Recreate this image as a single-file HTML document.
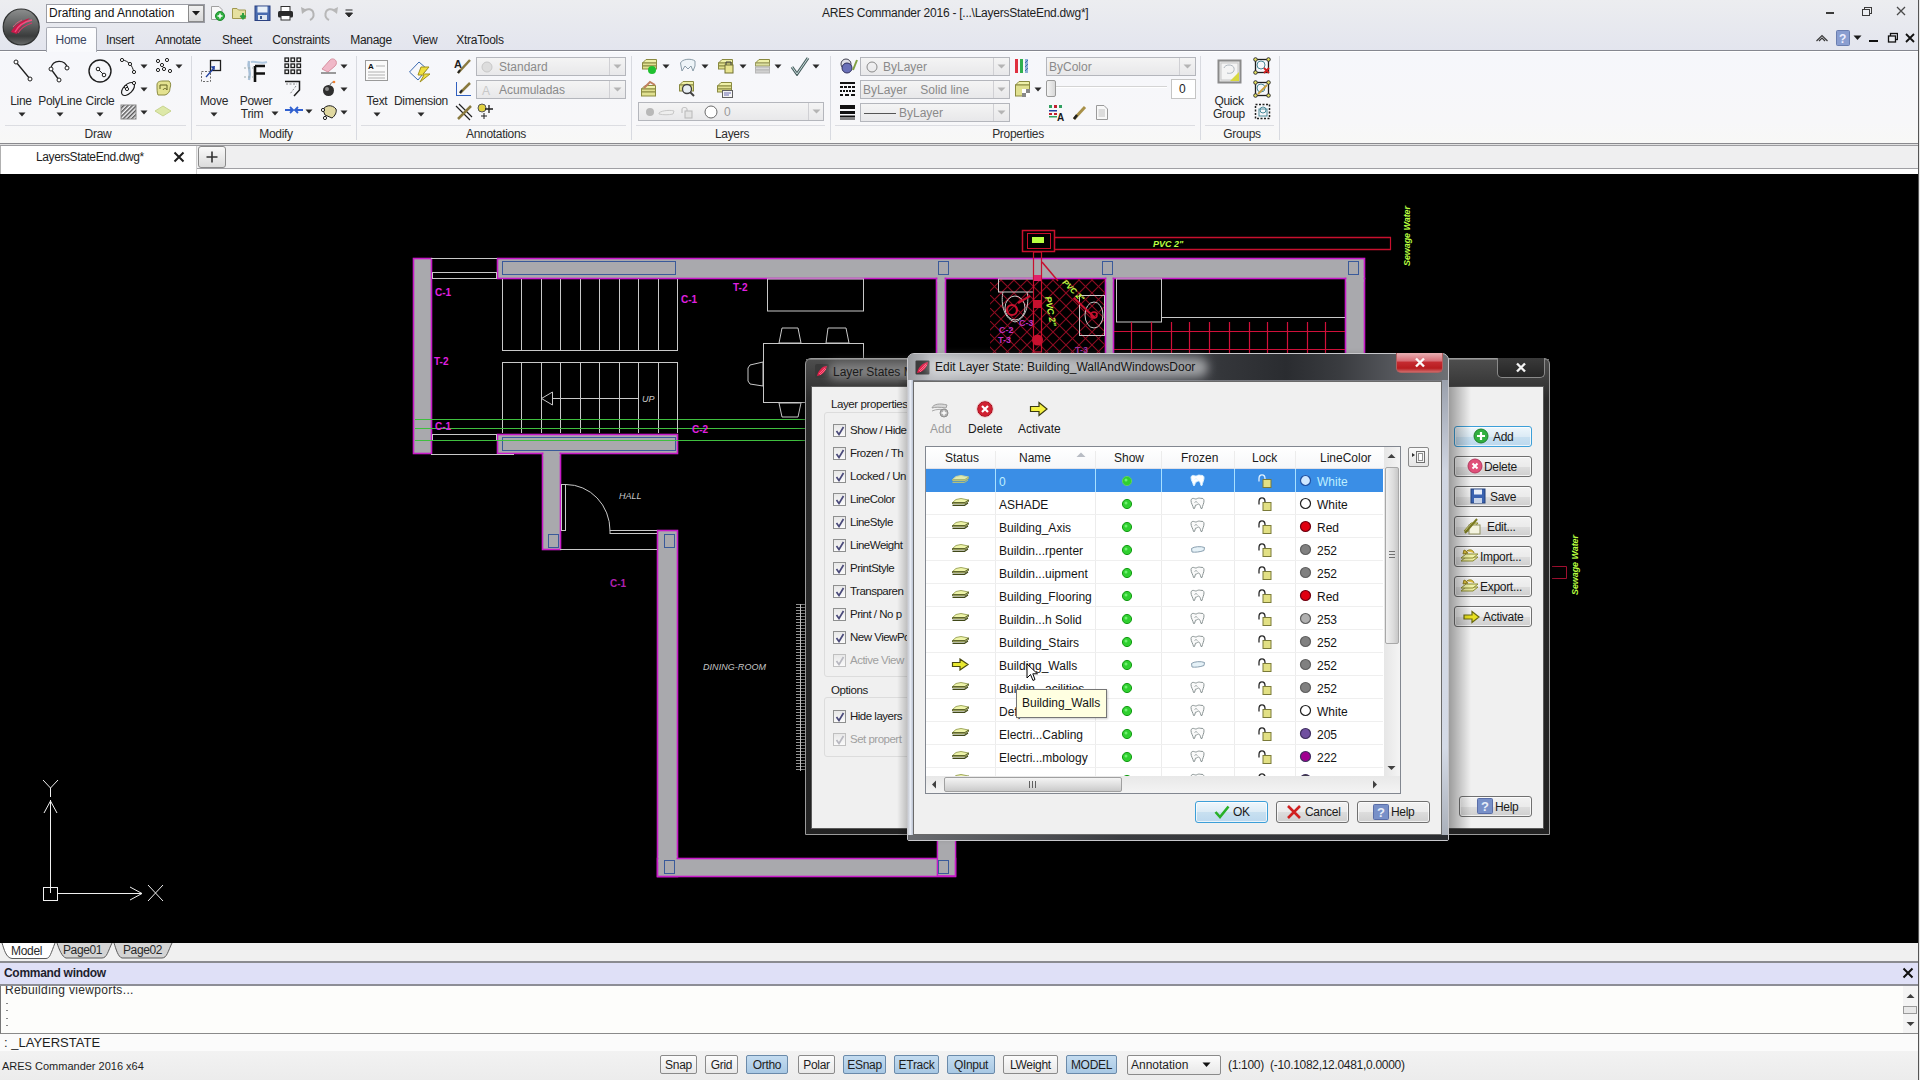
<!DOCTYPE html>
<html><head><meta charset="utf-8">
<style>
*{margin:0;padding:0;box-sizing:border-box}
html,body{width:1920px;height:1080px;overflow:hidden;background:#000;font-family:"Liberation Sans",sans-serif;font-size:12px;color:#1e1e1e}
.a{position:absolute}
.t{position:absolute;white-space:nowrap;line-height:1}
#title{left:0;top:0;width:1920px;height:51px;background:linear-gradient(#ecedf0,#e3e5ee)}
#ribbon{left:0;top:50px;width:1920px;height:96px;background:linear-gradient(#f6f7fb,#f7f7f9 75%,#f8f8f6);border-top:1px solid #858790;box-shadow:inset 0 1px 0 #fff}
#rb1{left:0;top:143px;width:1920px;height:3px;background:linear-gradient(#8a8a8e 0,#8a8a8e 33%,#e0e0e0 33%,#e0e0e0 66%,#9c9ca0 66%)}
#doctabs{left:0;top:146px;width:1920px;height:28px;background:linear-gradient(#efeff0 0,#efeff0 22px,#a0a0a4 22px,#a0a0a4 23px,#fdfdfd 23px)}
#draw{left:0;top:174px;width:1920px;height:769px;background:#000}
#laytabs{left:0;top:943px;width:1920px;height:18px;background:#f0f0f0}
#cmdhdr{left:0;top:961px;width:1920px;height:25px;background:#dfe0f7;border-top:2px solid #8a8b90;border-bottom:2px solid #8d8e96}
#cmdtxt{left:0;top:986px;width:1920px;height:48px;background:#fdfdfb;border-left:1px solid #777;border-bottom:1px solid #8a8a8a}
#cmdline{left:0;top:1034px;width:1920px;height:17px;background:#fbfbfb}
#status{left:0;top:1051px;width:1920px;height:29px;background:linear-gradient(#f2f2f2,#ececec)}
</style></head><body>
<div id="title" class="a"></div>
<div id="ribbon" class="a"></div>
<div id="rb1" class="a"></div>
<div id="doctabs" class="a"></div>
<div id="draw" class="a"></div>
<svg class="a" style="left:0;top:0;font-family:'Liberation Sans',sans-serif" width="1920" height="1080" viewBox="0 0 1920 1080"><rect x="413.5" y="258.5" width="18" height="195" fill="#a9a9ad" stroke="#c81ac8" stroke-width="1.6"/><rect x="497.5" y="258.5" width="867" height="20" fill="#a9a9ad" stroke="#c81ac8" stroke-width="1.6"/><rect x="497.5" y="434.5" width="180" height="19" fill="#a9a9ad" stroke="#c81ac8" stroke-width="1.6"/><rect x="542.5" y="453.5" width="18" height="96" fill="#a9a9ad" stroke="#c81ac8" stroke-width="1.6"/><rect x="657.5" y="530.5" width="20" height="346" fill="#a9a9ad" stroke="#c81ac8" stroke-width="1.6"/><rect x="657.5" y="858.5" width="298" height="18" fill="#a9a9ad" stroke="#c81ac8" stroke-width="1.6"/><rect x="937.5" y="836" width="18" height="40" fill="#a9a9ad" stroke="#c81ac8" stroke-width="1.6"/><rect x="936.5" y="278.5" width="9" height="80" fill="#a9a9ad" stroke="#c81ac8" stroke-width="1.6"/><rect x="1105.5" y="278.5" width="8" height="80" fill="#a9a9ad" stroke="#c81ac8" stroke-width="1.6"/><rect x="1345.5" y="278.5" width="19" height="80" fill="#a9a9ad" stroke="#c81ac8" stroke-width="1.6"/><rect x="543.5" y="450" width="16" height="6" fill="#a9a9ad"/><rect x="658.5" y="856" width="18" height="6" fill="#a9a9ad"/><rect x="938.5" y="834" width="16" height="26" fill="#a9a9ad"/><rect x="937.5" y="276" width="7" height="6" fill="#a9a9ad"/><rect x="1106.5" y="276" width="6" height="6" fill="#a9a9ad"/><rect x="1346.5" y="276" width="17" height="6" fill="#a9a9ad"/><rect x="502.5" y="261.5" width="173" height="13" fill="#a9a9ad" stroke="#3a5a9a" stroke-width="1"/><rect x="502.5" y="437.5" width="173" height="13" fill="#a9a9ad" stroke="#3a5a9a" stroke-width="1"/><rect x="938.5" y="261.5" width="10" height="13" fill="none" stroke="#3a5a9a" stroke-width="1"/><rect x="1102.5" y="261.5" width="10" height="13" fill="none" stroke="#3a5a9a" stroke-width="1"/><rect x="1348.5" y="261.5" width="10" height="13" fill="none" stroke="#3a5a9a" stroke-width="1"/><rect x="548.5" y="534.5" width="10" height="13" fill="none" stroke="#3a5a9a" stroke-width="1"/><rect x="664.5" y="534.5" width="10" height="13" fill="none" stroke="#3a5a9a" stroke-width="1"/><rect x="664.5" y="860.5" width="10" height="13" fill="none" stroke="#3a5a9a" stroke-width="1"/><rect x="938.5" y="860.5" width="10" height="13" fill="none" stroke="#3a5a9a" stroke-width="1"/><line x1="431" y1="258.5" x2="497" y2="258.5" stroke="#c8c8c8" stroke-width="1"/><rect x="432.5" y="272.5" width="64" height="6" fill="none" stroke="#c8c8c8" stroke-width="1"/><rect x="432.5" y="434.5" width="64" height="6" fill="none" stroke="#c8c8c8" stroke-width="1"/><line x1="431" y1="454.5" x2="514" y2="454.5" stroke="#c8c8c8" stroke-width="1"/><line x1="502.5" y1="279" x2="502.5" y2="350" stroke="#c8c8c8" stroke-width="1"/><line x1="502.5" y1="362" x2="502.5" y2="433" stroke="#c8c8c8" stroke-width="1"/><line x1="521.5" y1="279" x2="521.5" y2="350" stroke="#c8c8c8" stroke-width="1"/><line x1="521.5" y1="362" x2="521.5" y2="433" stroke="#c8c8c8" stroke-width="1"/><line x1="541.5" y1="279" x2="541.5" y2="350" stroke="#c8c8c8" stroke-width="1"/><line x1="541.5" y1="362" x2="541.5" y2="433" stroke="#c8c8c8" stroke-width="1"/><line x1="560.5" y1="279" x2="560.5" y2="350" stroke="#c8c8c8" stroke-width="1"/><line x1="560.5" y1="362" x2="560.5" y2="433" stroke="#c8c8c8" stroke-width="1"/><line x1="580.5" y1="279" x2="580.5" y2="350" stroke="#c8c8c8" stroke-width="1"/><line x1="580.5" y1="362" x2="580.5" y2="433" stroke="#c8c8c8" stroke-width="1"/><line x1="599.5" y1="279" x2="599.5" y2="350" stroke="#c8c8c8" stroke-width="1"/><line x1="599.5" y1="362" x2="599.5" y2="433" stroke="#c8c8c8" stroke-width="1"/><line x1="619.5" y1="279" x2="619.5" y2="350" stroke="#c8c8c8" stroke-width="1"/><line x1="619.5" y1="362" x2="619.5" y2="433" stroke="#c8c8c8" stroke-width="1"/><line x1="638.5" y1="279" x2="638.5" y2="350" stroke="#c8c8c8" stroke-width="1"/><line x1="638.5" y1="362" x2="638.5" y2="433" stroke="#c8c8c8" stroke-width="1"/><line x1="658.5" y1="279" x2="658.5" y2="350" stroke="#c8c8c8" stroke-width="1"/><line x1="658.5" y1="362" x2="658.5" y2="433" stroke="#c8c8c8" stroke-width="1"/><line x1="677.5" y1="279" x2="677.5" y2="350" stroke="#c8c8c8" stroke-width="1"/><line x1="677.5" y1="362" x2="677.5" y2="433" stroke="#c8c8c8" stroke-width="1"/><line x1="502" y1="350.5" x2="678" y2="350.5" stroke="#c8c8c8" stroke-width="1"/><line x1="502" y1="362.5" x2="678" y2="362.5" stroke="#c8c8c8" stroke-width="1"/><polygon points="541.5,398.5 552.5,392 552.5,405" fill="none" stroke="#c8c8c8" stroke-width="1"/><line x1="553" y1="398.5" x2="638" y2="398.5" stroke="#c8c8c8" stroke-width="1"/><text x="642" y="402" fill="#c8c8c8" font-size="9" font-style="italic">UP</text><line x1="415" y1="419.5" x2="806" y2="419.5" stroke="#3fbf3f" stroke-width="1"/><line x1="415" y1="428.5" x2="806" y2="428.5" stroke="#3fbf3f" stroke-width="1"/><line x1="415" y1="440.5" x2="806" y2="440.5" stroke="#3fbf3f" stroke-width="1"/><text x="435" y="296" fill="#e020e0" font-size="10" font-weight="bold">C-1</text><text x="434" y="365" fill="#e020e0" font-size="10" font-weight="bold">T-2</text><text x="435" y="430" fill="#e020e0" font-size="10" font-weight="bold">C-1</text><text x="681" y="303" fill="#e020e0" font-size="10" font-weight="bold">C-1</text><text x="733" y="291" fill="#e020e0" font-size="10" font-weight="bold">T-2</text><text x="692" y="433" fill="#e020e0" font-size="10" font-weight="bold">C-2</text><text x="610" y="587" fill="#b020b0" font-size="10" font-weight="bold">C-1</text><rect x="767.5" y="279" width="96" height="32" fill="none" stroke="#c8c8c8" stroke-width="1"/><rect x="763.5" y="343.5" width="100" height="59" fill="none" stroke="#c8c8c8" stroke-width="1"/><polygon points="779,343 782,328 798,328 801,343" fill="none" stroke="#c8c8c8" stroke-width="1"/><polygon points="826,343 828,328 846,328 849,343" fill="none" stroke="#c8c8c8" stroke-width="1"/><polygon points="779,403 782,417 798,417 801,403" fill="none" stroke="#c8c8c8" stroke-width="1"/><polygon points="763,362 750,365 748,368 748,381 750,384 763,386" fill="none" stroke="#c8c8c8" stroke-width="1"/><line x1="677.5" y1="279" x2="677.5" y2="350" stroke="#c8c8c8" stroke-width="1"/><line x1="677.5" y1="362" x2="677.5" y2="433" stroke="#c8c8c8" stroke-width="1"/><rect x="561.5" y="484.5" width="4" height="46" fill="none" stroke="#c8c8c8" stroke-width="1"/><path d="M566,484.5 A44,46 0 0 1 610,530.5" fill="none" stroke="#c8c8c8" stroke-width="1"/><line x1="610" y1="530.5" x2="657" y2="530.5" stroke="#c8c8c8" stroke-width="1"/><line x1="610" y1="533.5" x2="657" y2="533.5" stroke="#c8c8c8" stroke-width="1"/><line x1="610" y1="530" x2="610" y2="534" stroke="#c8c8c8" stroke-width="1"/><line x1="560" y1="549.5" x2="657" y2="549.5" stroke="#c8c8c8" stroke-width="1"/><text x="619" y="499" fill="#c8c8c8" font-size="9" font-style="italic">HALL</text><text x="703" y="670" fill="#c8c8c8" font-size="9" font-style="italic" textLength="63">DINING-ROOM</text><line x1="796" y1="604.5" x2="806" y2="604.5" stroke="#bdbdbd" stroke-width="0.8"/><line x1="796" y1="607.5" x2="806" y2="607.5" stroke="#bdbdbd" stroke-width="0.8"/><line x1="796" y1="610.5" x2="806" y2="610.5" stroke="#bdbdbd" stroke-width="0.8"/><line x1="796" y1="613.5" x2="806" y2="613.5" stroke="#bdbdbd" stroke-width="0.8"/><line x1="796" y1="616.5" x2="806" y2="616.5" stroke="#bdbdbd" stroke-width="0.8"/><line x1="796" y1="619.5" x2="806" y2="619.5" stroke="#bdbdbd" stroke-width="0.8"/><line x1="796" y1="622.5" x2="806" y2="622.5" stroke="#bdbdbd" stroke-width="0.8"/><line x1="796" y1="625.5" x2="806" y2="625.5" stroke="#bdbdbd" stroke-width="0.8"/><line x1="796" y1="628.5" x2="806" y2="628.5" stroke="#bdbdbd" stroke-width="0.8"/><line x1="796" y1="631.5" x2="806" y2="631.5" stroke="#bdbdbd" stroke-width="0.8"/><line x1="796" y1="634.5" x2="806" y2="634.5" stroke="#bdbdbd" stroke-width="0.8"/><line x1="796" y1="637.5" x2="806" y2="637.5" stroke="#bdbdbd" stroke-width="0.8"/><line x1="796" y1="640.5" x2="806" y2="640.5" stroke="#bdbdbd" stroke-width="0.8"/><line x1="796" y1="643.5" x2="806" y2="643.5" stroke="#bdbdbd" stroke-width="0.8"/><line x1="796" y1="646.5" x2="806" y2="646.5" stroke="#bdbdbd" stroke-width="0.8"/><line x1="796" y1="649.5" x2="806" y2="649.5" stroke="#bdbdbd" stroke-width="0.8"/><line x1="796" y1="652.5" x2="806" y2="652.5" stroke="#bdbdbd" stroke-width="0.8"/><line x1="796" y1="655.5" x2="806" y2="655.5" stroke="#bdbdbd" stroke-width="0.8"/><line x1="796" y1="658.5" x2="806" y2="658.5" stroke="#bdbdbd" stroke-width="0.8"/><line x1="796" y1="661.5" x2="806" y2="661.5" stroke="#bdbdbd" stroke-width="0.8"/><line x1="796" y1="664.5" x2="806" y2="664.5" stroke="#bdbdbd" stroke-width="0.8"/><line x1="796" y1="667.5" x2="806" y2="667.5" stroke="#bdbdbd" stroke-width="0.8"/><line x1="796" y1="670.5" x2="806" y2="670.5" stroke="#bdbdbd" stroke-width="0.8"/><line x1="796" y1="673.5" x2="806" y2="673.5" stroke="#bdbdbd" stroke-width="0.8"/><line x1="796" y1="676.5" x2="806" y2="676.5" stroke="#bdbdbd" stroke-width="0.8"/><line x1="796" y1="679.5" x2="806" y2="679.5" stroke="#bdbdbd" stroke-width="0.8"/><line x1="796" y1="682.5" x2="806" y2="682.5" stroke="#bdbdbd" stroke-width="0.8"/><line x1="796" y1="685.5" x2="806" y2="685.5" stroke="#bdbdbd" stroke-width="0.8"/><line x1="796" y1="688.5" x2="806" y2="688.5" stroke="#bdbdbd" stroke-width="0.8"/><line x1="796" y1="691.5" x2="806" y2="691.5" stroke="#bdbdbd" stroke-width="0.8"/><line x1="796" y1="694.5" x2="806" y2="694.5" stroke="#bdbdbd" stroke-width="0.8"/><line x1="796" y1="697.5" x2="806" y2="697.5" stroke="#bdbdbd" stroke-width="0.8"/><line x1="796" y1="700.5" x2="806" y2="700.5" stroke="#bdbdbd" stroke-width="0.8"/><line x1="796" y1="703.5" x2="806" y2="703.5" stroke="#bdbdbd" stroke-width="0.8"/><line x1="796" y1="706.5" x2="806" y2="706.5" stroke="#bdbdbd" stroke-width="0.8"/><line x1="796" y1="709.5" x2="806" y2="709.5" stroke="#bdbdbd" stroke-width="0.8"/><line x1="796" y1="712.5" x2="806" y2="712.5" stroke="#bdbdbd" stroke-width="0.8"/><line x1="796" y1="715.5" x2="806" y2="715.5" stroke="#bdbdbd" stroke-width="0.8"/><line x1="796" y1="718.5" x2="806" y2="718.5" stroke="#bdbdbd" stroke-width="0.8"/><line x1="796" y1="721.5" x2="806" y2="721.5" stroke="#bdbdbd" stroke-width="0.8"/><line x1="796" y1="724.5" x2="806" y2="724.5" stroke="#bdbdbd" stroke-width="0.8"/><line x1="796" y1="727.5" x2="806" y2="727.5" stroke="#bdbdbd" stroke-width="0.8"/><line x1="796" y1="730.5" x2="806" y2="730.5" stroke="#bdbdbd" stroke-width="0.8"/><line x1="796" y1="733.5" x2="806" y2="733.5" stroke="#bdbdbd" stroke-width="0.8"/><line x1="796" y1="736.5" x2="806" y2="736.5" stroke="#bdbdbd" stroke-width="0.8"/><line x1="796" y1="739.5" x2="806" y2="739.5" stroke="#bdbdbd" stroke-width="0.8"/><line x1="796" y1="742.5" x2="806" y2="742.5" stroke="#bdbdbd" stroke-width="0.8"/><line x1="796" y1="745.5" x2="806" y2="745.5" stroke="#bdbdbd" stroke-width="0.8"/><line x1="796" y1="748.5" x2="806" y2="748.5" stroke="#bdbdbd" stroke-width="0.8"/><line x1="796" y1="751.5" x2="806" y2="751.5" stroke="#bdbdbd" stroke-width="0.8"/><line x1="796" y1="754.5" x2="806" y2="754.5" stroke="#bdbdbd" stroke-width="0.8"/><line x1="796" y1="757.5" x2="806" y2="757.5" stroke="#bdbdbd" stroke-width="0.8"/><line x1="796" y1="760.5" x2="806" y2="760.5" stroke="#bdbdbd" stroke-width="0.8"/><line x1="796" y1="763.5" x2="806" y2="763.5" stroke="#bdbdbd" stroke-width="0.8"/><line x1="796" y1="766.5" x2="806" y2="766.5" stroke="#bdbdbd" stroke-width="0.8"/><line x1="796" y1="769.5" x2="806" y2="769.5" stroke="#bdbdbd" stroke-width="0.8"/><line x1="800.5" y1="604" x2="800.5" y2="771" stroke="#cfcfcf" stroke-width="1"/><rect x="1022.5" y="230.5" width="32" height="21" fill="none" stroke="#c8102e" stroke-width="1.5"/><rect x="1027.5" y="233.5" width="23" height="15" fill="none" stroke="#c8102e" stroke-width="1"/><rect x="1032" y="237" width="12" height="6" fill="#b8ff40"/><line x1="1054" y1="237.5" x2="1391" y2="237.5" stroke="#c8102e" stroke-width="1.5"/><line x1="1054" y1="249.5" x2="1391" y2="249.5" stroke="#c8102e" stroke-width="1.5"/><line x1="1390.5" y1="237" x2="1390.5" y2="250" stroke="#c8102e" stroke-width="1.2"/><text x="1153" y="247" fill="#b8ff40" font-size="9" font-style="italic" font-weight="bold">PVC 2"</text><clipPath id="bath"><rect x="990" y="279" width="115" height="75"/></clipPath><g clip-path="url(#bath)"><line x1="870" y1="279" x2="950" y2="359" stroke="#8c0c22" stroke-width="1.1"/><line x1="950" y1="279" x2="870" y2="359" stroke="#8c0c22" stroke-width="1.1"/><line x1="883" y1="279" x2="963" y2="359" stroke="#8c0c22" stroke-width="1.1"/><line x1="963" y1="279" x2="883" y2="359" stroke="#8c0c22" stroke-width="1.1"/><line x1="896" y1="279" x2="976" y2="359" stroke="#8c0c22" stroke-width="1.1"/><line x1="976" y1="279" x2="896" y2="359" stroke="#8c0c22" stroke-width="1.1"/><line x1="909" y1="279" x2="989" y2="359" stroke="#8c0c22" stroke-width="1.1"/><line x1="989" y1="279" x2="909" y2="359" stroke="#8c0c22" stroke-width="1.1"/><line x1="922" y1="279" x2="1002" y2="359" stroke="#8c0c22" stroke-width="1.1"/><line x1="1002" y1="279" x2="922" y2="359" stroke="#8c0c22" stroke-width="1.1"/><line x1="935" y1="279" x2="1015" y2="359" stroke="#8c0c22" stroke-width="1.1"/><line x1="1015" y1="279" x2="935" y2="359" stroke="#8c0c22" stroke-width="1.1"/><line x1="948" y1="279" x2="1028" y2="359" stroke="#8c0c22" stroke-width="1.1"/><line x1="1028" y1="279" x2="948" y2="359" stroke="#8c0c22" stroke-width="1.1"/><line x1="961" y1="279" x2="1041" y2="359" stroke="#8c0c22" stroke-width="1.1"/><line x1="1041" y1="279" x2="961" y2="359" stroke="#8c0c22" stroke-width="1.1"/><line x1="974" y1="279" x2="1054" y2="359" stroke="#8c0c22" stroke-width="1.1"/><line x1="1054" y1="279" x2="974" y2="359" stroke="#8c0c22" stroke-width="1.1"/><line x1="987" y1="279" x2="1067" y2="359" stroke="#8c0c22" stroke-width="1.1"/><line x1="1067" y1="279" x2="987" y2="359" stroke="#8c0c22" stroke-width="1.1"/><line x1="1000" y1="279" x2="1080" y2="359" stroke="#8c0c22" stroke-width="1.1"/><line x1="1080" y1="279" x2="1000" y2="359" stroke="#8c0c22" stroke-width="1.1"/><line x1="1013" y1="279" x2="1093" y2="359" stroke="#8c0c22" stroke-width="1.1"/><line x1="1093" y1="279" x2="1013" y2="359" stroke="#8c0c22" stroke-width="1.1"/><line x1="1026" y1="279" x2="1106" y2="359" stroke="#8c0c22" stroke-width="1.1"/><line x1="1106" y1="279" x2="1026" y2="359" stroke="#8c0c22" stroke-width="1.1"/><line x1="1039" y1="279" x2="1119" y2="359" stroke="#8c0c22" stroke-width="1.1"/><line x1="1119" y1="279" x2="1039" y2="359" stroke="#8c0c22" stroke-width="1.1"/><line x1="1052" y1="279" x2="1132" y2="359" stroke="#8c0c22" stroke-width="1.1"/><line x1="1132" y1="279" x2="1052" y2="359" stroke="#8c0c22" stroke-width="1.1"/><line x1="1065" y1="279" x2="1145" y2="359" stroke="#8c0c22" stroke-width="1.1"/><line x1="1145" y1="279" x2="1065" y2="359" stroke="#8c0c22" stroke-width="1.1"/><line x1="1078" y1="279" x2="1158" y2="359" stroke="#8c0c22" stroke-width="1.1"/><line x1="1158" y1="279" x2="1078" y2="359" stroke="#8c0c22" stroke-width="1.1"/><line x1="1091" y1="279" x2="1171" y2="359" stroke="#8c0c22" stroke-width="1.1"/><line x1="1171" y1="279" x2="1091" y2="359" stroke="#8c0c22" stroke-width="1.1"/><line x1="1104" y1="279" x2="1184" y2="359" stroke="#8c0c22" stroke-width="1.1"/><line x1="1184" y1="279" x2="1104" y2="359" stroke="#8c0c22" stroke-width="1.1"/><line x1="1117" y1="279" x2="1197" y2="359" stroke="#8c0c22" stroke-width="1.1"/><line x1="1197" y1="279" x2="1117" y2="359" stroke="#8c0c22" stroke-width="1.1"/><line x1="1130" y1="279" x2="1210" y2="359" stroke="#8c0c22" stroke-width="1.1"/><line x1="1210" y1="279" x2="1130" y2="359" stroke="#8c0c22" stroke-width="1.1"/><line x1="1143" y1="279" x2="1223" y2="359" stroke="#8c0c22" stroke-width="1.1"/><line x1="1223" y1="279" x2="1143" y2="359" stroke="#8c0c22" stroke-width="1.1"/><line x1="1156" y1="279" x2="1236" y2="359" stroke="#8c0c22" stroke-width="1.1"/><line x1="1236" y1="279" x2="1156" y2="359" stroke="#8c0c22" stroke-width="1.1"/><line x1="1169" y1="279" x2="1249" y2="359" stroke="#8c0c22" stroke-width="1.1"/><line x1="1249" y1="279" x2="1169" y2="359" stroke="#8c0c22" stroke-width="1.1"/><line x1="1182" y1="279" x2="1262" y2="359" stroke="#8c0c22" stroke-width="1.1"/><line x1="1262" y1="279" x2="1182" y2="359" stroke="#8c0c22" stroke-width="1.1"/><line x1="1195" y1="279" x2="1275" y2="359" stroke="#8c0c22" stroke-width="1.1"/><line x1="1275" y1="279" x2="1195" y2="359" stroke="#8c0c22" stroke-width="1.1"/><line x1="1208" y1="279" x2="1288" y2="359" stroke="#8c0c22" stroke-width="1.1"/><line x1="1288" y1="279" x2="1208" y2="359" stroke="#8c0c22" stroke-width="1.1"/><line x1="1221" y1="279" x2="1301" y2="359" stroke="#8c0c22" stroke-width="1.1"/><line x1="1301" y1="279" x2="1221" y2="359" stroke="#8c0c22" stroke-width="1.1"/></g><rect x="998.5" y="279" width="35" height="13" fill="none" stroke="#c8c8c8" stroke-width="1"/><path d="M1003,292 C1001,300 1002,318 1015,322 C1028,318 1029,300 1027,292" fill="none" stroke="#c8c8c8" stroke-width="1"/><ellipse cx="1015" cy="308" rx="10" ry="12" fill="none" stroke="#c8c8c8"/><circle cx="1012" cy="310" r="5" fill="none" stroke="#c8102e" stroke-width="2.2"/><line x1="1018" y1="303" x2="1030" y2="296" stroke="#c8102e" stroke-width="2.2"/><rect x="1079.5" y="295.5" width="25" height="40" fill="none" stroke="#c8c8c8" stroke-width="1"/><ellipse cx="1094" cy="315" rx="9" ry="13" fill="none" stroke="#c8c8c8"/><circle cx="1094" cy="315" r="3" fill="none" stroke="#c8102e" stroke-width="1.5"/><rect x="1033.5" y="252" width="8" height="100" fill="none" stroke="#c8102e" stroke-width="1.2"/><rect x="1034" y="275" width="7" height="6" fill="#e0206a"/><rect x="1034" y="300" width="7" height="8" fill="#c8102e"/><circle cx="1037.5" cy="340" r="5.5" fill="#c8102e"/><line x1="1042" y1="262" x2="1058" y2="281" stroke="#c8102e" stroke-width="1.5"/><line x1="1074" y1="298" x2="1095" y2="318" stroke="#c8102e" stroke-width="2.2"/><text x="1045" y="297" fill="#b8ff40" font-size="9" font-style="italic" font-weight="bold" transform="rotate(80 1045 297)">PVC 2"</text><text x="1062" y="283" fill="#b8ff40" font-size="8" font-style="italic" font-weight="bold" transform="rotate(45 1062 283)">PVC 2"</text><text x="999" y="333" fill="#c030c0" font-size="9" font-weight="bold">C-2</text><text x="1019" y="326" fill="#c030c0" font-size="9" font-weight="bold">C-3</text><text x="998" y="343" fill="#c030c0" font-size="9" font-weight="bold">T-3</text><text x="1075" y="353" fill="#a030a0" font-size="9" font-weight="bold">T-3</text><rect x="1116.5" y="279" width="45" height="43" fill="none" stroke="#c8c8c8" stroke-width="1"/><line x1="1162" y1="317.5" x2="1345" y2="317.5" stroke="#c8c8c8" stroke-width="1"/><line x1="1131.5" y1="322" x2="1131.5" y2="354" stroke="#d0103a" stroke-width="1.2"/><line x1="1151.5" y1="322" x2="1151.5" y2="354" stroke="#d0103a" stroke-width="1.2"/><line x1="1171.5" y1="322" x2="1171.5" y2="354" stroke="#d0103a" stroke-width="1.2"/><line x1="1189.5" y1="322" x2="1189.5" y2="354" stroke="#d0103a" stroke-width="1.2"/><line x1="1209.5" y1="322" x2="1209.5" y2="354" stroke="#d0103a" stroke-width="1.2"/><line x1="1229.5" y1="322" x2="1229.5" y2="354" stroke="#d0103a" stroke-width="1.2"/><line x1="1249.5" y1="322" x2="1249.5" y2="354" stroke="#d0103a" stroke-width="1.2"/><line x1="1267.5" y1="322" x2="1267.5" y2="354" stroke="#d0103a" stroke-width="1.2"/><line x1="1287.5" y1="322" x2="1287.5" y2="354" stroke="#d0103a" stroke-width="1.2"/><line x1="1307.5" y1="322" x2="1307.5" y2="354" stroke="#d0103a" stroke-width="1.2"/><line x1="1325.5" y1="322" x2="1325.5" y2="354" stroke="#d0103a" stroke-width="1.2"/><line x1="1114" y1="331.5" x2="1345" y2="331.5" stroke="#d0103a" stroke-width="1.2"/><line x1="1114" y1="349.5" x2="1345" y2="349.5" stroke="#d0103a" stroke-width="1.2"/><text x="1410" y="266" fill="#b8ff40" font-size="9" font-style="italic" font-weight="bold" transform="rotate(-90 1410 266)" textLength="60">Sewage Water</text><text x="1578" y="595" fill="#b8ff40" font-size="9" font-style="italic" font-weight="bold" transform="rotate(-90 1578 595)" textLength="60">Sewage Water</text><polyline points="1552,566.5 1566.5,566.5 1566.5,578.5 1552,578.5" fill="none" stroke="#a01030" stroke-width="1"/><line x1="50.5" y1="893" x2="50.5" y2="800" stroke="#f0f0f0" stroke-width="1"/><polyline points="44,813 50.5,801 57,813" fill="none" stroke="#f0f0f0" stroke-width="1"/><polyline points="43,780 50.5,788 58,780" fill="none" stroke="#f0f0f0" stroke-width="1"/><line x1="50.5" y1="788" x2="50.5" y2="797" stroke="#f0f0f0" stroke-width="1"/><line x1="57" y1="893.5" x2="142" y2="893.5" stroke="#f0f0f0" stroke-width="1"/><polyline points="130,887 142,893.5 130,900" fill="none" stroke="#f0f0f0" stroke-width="1"/><line x1="148" y1="885" x2="163" y2="901" stroke="#f0f0f0" stroke-width="1"/><line x1="163" y1="885" x2="148" y2="901" stroke="#f0f0f0" stroke-width="1"/><rect x="43.5" y="887.5" width="14" height="13" fill="none" stroke="#f0f0f0" stroke-width="1"/></svg>
<div id="laytabs" class="a"></div>
<div id="cmdhdr" class="a"></div>
<div id="cmdtxt" class="a"></div>
<div id="cmdline" class="a"></div>
<div id="status" class="a"></div>
<div class="a" style="left:46px;top:27px;width:51px;height:25px;background:linear-gradient(#fdfdfe,#f8f9fc);border:1px solid #a8abb4;border-bottom:none;border-radius:2px 2px 0 0"></div>
<svg class="a" style="left:2px;top:7px" width="40" height="40"><defs><linearGradient id="lg" x1="0" y1="0" x2="0" y2="1"><stop offset="0" stop-color="#8c8e8e"/><stop offset="0.45" stop-color="#5e6060"/><stop offset="0.75" stop-color="#3a3c3c"/><stop offset="1" stop-color="#6a6c6c"/></linearGradient></defs><circle cx="19.2" cy="20" r="18" fill="url(#lg)" stroke="#303232" stroke-width="1.2"/><path d="M9,25 C12,19 18,14 28,11 C22,16 17,21 15,27Z" fill="#c81848"/><path d="M13,25 C16,19 21,15 30,13" fill="none" stroke="#f05080" stroke-width="1.3"/><path d="M16,26 C19,21 24,18 30,16" fill="none" stroke="#d83868" stroke-width="1.1"/><path d="M11,20 C13,17 16,15 20,13" fill="none" stroke="#e06080" stroke-width="1"/></svg>
<div class="a" style="left:46px;top:4px;width:159px;height:19px;background:#fff;border:1px solid #9a9ca4"></div>
<div class="t" style="left:49px;top:7px;font-size:12px;color:#141414;">Drafting and Annotation</div>
<div class="a" style="left:188px;top:5px;width:16px;height:17px;background:linear-gradient(#f0f0f0,#d8d8d8);border:1px solid #8a8a8a"></div>
<svg class="a" style="left:192px;top:11px" width="8" height="5"><path d="M0,0 H8 L4,4.5Z" fill="#1a1a1a"/></svg>
<svg class="a" style="left:210px;top:5px" width="16" height="16"><path d="M1.5,1.5 H9 L12,4.5 V14.5 H1.5Z" fill="#f8f8f8" stroke="#a0a0a0"/><circle cx="10" cy="11" r="4.5" fill="#30b040" stroke="#208a30"/><path d="M10,8.5 V13.5 M7.5,11 H12.5" stroke="#fff" stroke-width="1.5"/></svg>
<svg class="a" style="left:231px;top:5px" width="18" height="16"><path d="M1.5,3.5 H6 L7.5,5 H14.5 V13.5 H1.5Z" fill="#e6e0a0" stroke="#a09850"/><path d="M12,8 V12 M9.5,10.5 L12,13.5 L14.5,10.5" stroke="#30a040" stroke-width="2" fill="none"/></svg>
<svg class="a" style="left:254px;top:5px" width="17" height="16"><rect x="1" y="1" width="15" height="14.5" fill="#4a6cb0" stroke="#2a4080"/><rect x="3.5" y="1.5" width="10" height="6" fill="#e8f0f8"/><rect x="4" y="10" width="9" height="5" fill="#dfe6f0"/><rect x="6" y="11" width="2" height="3" fill="#3a5a90"/></svg>
<svg class="a" style="left:277px;top:5px" width="17" height="16"><rect x="4" y="1.5" width="9" height="5" fill="#fff" stroke="#303030"/><rect x="1" y="6" width="15" height="6.5" rx="1.5" fill="#2a2a2a"/><rect x="4" y="10.5" width="9" height="4.5" fill="#fff" stroke="#303030"/></svg>
<svg class="a" style="left:300px;top:5px" width="16" height="16"><path d="M4,6 C7,3 13,3.5 13.5,9 C14,12 12,14 10,15" fill="none" stroke="#b4b4b4" stroke-width="2"/><path d="M1,2 L2,9 L7,5Z" fill="#b4b4b4"/></svg>
<svg class="a" style="left:323px;top:5px" width="16" height="16"><path d="M12,6 C9,3 3,3.5 2.5,9 C2,12 4,14 6,15" fill="none" stroke="#b8b8b8" stroke-width="2"/><path d="M15,2 L14,9 L9,5Z" fill="#b8b8b8"/></svg>
<svg class="a" style="left:345px;top:9px" width="8" height="9"><path d="M0.5,1 H7.5 M0.5,4 H7.5 L4,8Z" stroke="#2a2a2a" fill="#2a2a2a"/></svg>
<div class="t" style="left:822px;top:7px;font-size:12px;color:#1e1e1e;letter-spacing:-0.25px">ARES Commander 2016 - [...\LayersStateEnd.dwg*]</div>
<div class="a" style="left:1826px;top:12px;width:8px;height:2px;background:#3a3a3a"></div>
<svg class="a" style="left:1861px;top:6px" width="12" height="11"><rect x="3.5" y="1.5" width="7" height="6" fill="none" stroke="#3a3a3a"/><rect x="1.5" y="3.5" width="7" height="6" fill="#eceef2" stroke="#3a3a3a"/></svg>
<svg class="a" style="left:1896px;top:6px" width="10" height="10"><path d="M1,1 L9,9 M9,1 L1,9" stroke="#4a4a4a" stroke-width="1.3"/></svg>
<div class="t" style="left:-29px;top:34px;width:200px;text-align:center;font-size:12px;color:#3a4662;letter-spacing:-0.3px">Home</div>
<div class="t" style="left:20px;top:34px;width:200px;text-align:center;font-size:12px;color:#1e1e1e;letter-spacing:-0.3px">Insert</div>
<div class="t" style="left:78px;top:34px;width:200px;text-align:center;font-size:12px;color:#1e1e1e;letter-spacing:-0.3px">Annotate</div>
<div class="t" style="left:137px;top:34px;width:200px;text-align:center;font-size:12px;color:#1e1e1e;letter-spacing:-0.3px">Sheet</div>
<div class="t" style="left:201px;top:34px;width:200px;text-align:center;font-size:12px;color:#1e1e1e;letter-spacing:-0.3px">Constraints</div>
<div class="t" style="left:271px;top:34px;width:200px;text-align:center;font-size:12px;color:#1e1e1e;letter-spacing:-0.3px">Manage</div>
<div class="t" style="left:325px;top:34px;width:200px;text-align:center;font-size:12px;color:#1e1e1e;letter-spacing:-0.3px">View</div>
<div class="t" style="left:380px;top:34px;width:200px;text-align:center;font-size:12px;color:#1e1e1e;letter-spacing:-0.3px">XtraTools</div>
<svg class="a" style="left:1815px;top:33px" width="14" height="10"><path d="M1.5,8 L7,2.5 L12.5,8 M4,8 L7,5 L10,8" fill="none" stroke="#3a3a3a" stroke-width="1.2"/></svg>
<svg class="a" style="left:1836px;top:30px" width="14" height="16"><rect x="0.5" y="0.5" width="13" height="15" rx="1" fill="#8a9ed0" stroke="#6a7eb0"/><text x="3" y="13" font-size="12" font-weight="bold" fill="#eef" style="font-family:'Liberation Sans'">?</text></svg>
<svg class="a" style="left:1853px;top:35px" width="9" height="6"><path d="M0.5,0.5 H8.5 L4.5,5Z" fill="#1a1a1a"/></svg>
<div class="a" style="left:1869px;top:40px;width:9px;height:2px;background:#111"></div>
<svg class="a" style="left:1887px;top:32px" width="11" height="11"><rect x="3.5" y="1.5" width="7" height="6" fill="none" stroke="#111" stroke-width="1.3"/><rect x="1.5" y="4" width="7" height="6" fill="#e8eaef" stroke="#111" stroke-width="1.3"/></svg>
<svg class="a" style="left:1905px;top:33px" width="10" height="10"><path d="M1,1 L9,9 M9,1 L1,9" stroke="#111" stroke-width="1.8"/></svg>
<div class="a" style="left:191px;top:56px;width:1px;height:84px;background:#d8dae0"></div>
<div class="a" style="left:356px;top:56px;width:1px;height:84px;background:#d8dae0"></div>
<div class="a" style="left:631px;top:56px;width:1px;height:84px;background:#d8dae0"></div>
<div class="a" style="left:830px;top:56px;width:1px;height:84px;background:#d8dae0"></div>
<div class="a" style="left:1200px;top:56px;width:1px;height:84px;background:#d8dae0"></div>
<div class="a" style="left:1279px;top:56px;width:1px;height:84px;background:#d8dae0"></div>
<div class="a" style="left:5px;top:125px;width:181px;height:1px;background:#dcdde2"></div>
<div class="a" style="left:196px;top:125px;width:155px;height:1px;background:#dcdde2"></div>
<div class="a" style="left:361px;top:125px;width:265px;height:1px;background:#dcdde2"></div>
<div class="a" style="left:636px;top:125px;width:189px;height:1px;background:#dcdde2"></div>
<div class="a" style="left:835px;top:125px;width:360px;height:1px;background:#dcdde2"></div>
<div class="a" style="left:1205px;top:125px;width:69px;height:1px;background:#dcdde2"></div>
<div class="t" style="left:-2px;top:128px;width:200px;text-align:center;font-size:12px;color:#2e2e2e;letter-spacing:-0.3px">Draw</div>
<div class="t" style="left:176px;top:128px;width:200px;text-align:center;font-size:12px;color:#2e2e2e;letter-spacing:-0.3px">Modify</div>
<div class="t" style="left:396px;top:128px;width:200px;text-align:center;font-size:12px;color:#2e2e2e;letter-spacing:-0.3px">Annotations</div>
<div class="t" style="left:632px;top:128px;width:200px;text-align:center;font-size:12px;color:#2e2e2e;letter-spacing:-0.3px">Layers</div>
<div class="t" style="left:918px;top:128px;width:200px;text-align:center;font-size:12px;color:#2e2e2e;letter-spacing:-0.3px">Properties</div>
<div class="t" style="left:1142px;top:128px;width:200px;text-align:center;font-size:12px;color:#2e2e2e;letter-spacing:-0.3px">Groups</div>
<svg class="a" style="left:12px;top:58px" width="22" height="26"><path d="M4,4 L18,21" stroke="#1e1e1e" stroke-width="1.3"/><circle cx="4" cy="4" r="2" fill="#fff" stroke="#1e1e1e"/><circle cx="18" cy="21" r="2" fill="#fff" stroke="#1e1e1e"/></svg>
<svg class="a" style="left:48px;top:58px" width="24" height="26"><path d="M3,11 C3,1 19,1 19,10" fill="none" stroke="#1e1e1e" stroke-width="1.3"/><path d="M3,11 L11,22" stroke="#1e1e1e" stroke-width="1.3"/><circle cx="3" cy="11" r="2" fill="#fff" stroke="#1e1e1e"/><circle cx="19" cy="10" r="2" fill="#fff" stroke="#1e1e1e"/><circle cx="11" cy="22" r="2" fill="#fff" stroke="#1e1e1e"/></svg>
<svg class="a" style="left:87px;top:58px" width="26" height="26"><circle cx="13" cy="13" r="11" fill="none" stroke="#1e1e1e" stroke-width="1.4"/><path d="M11,11 L17,17" stroke="#1e1e1e"/><circle cx="11" cy="11" r="1.8" fill="#fff" stroke="#1e1e1e"/><circle cx="17" cy="17" r="1.8" fill="#fff" stroke="#1e1e1e"/></svg>
<div class="t" style="left:-79px;top:95px;width:200px;text-align:center;font-size:12px;color:#2a2a2a;letter-spacing:-0.3px">Line</div>
<div class="t" style="left:-40px;top:95px;width:200px;text-align:center;font-size:12px;color:#2a2a2a;letter-spacing:-0.3px">PolyLine</div>
<div class="t" style="left:0px;top:95px;width:200px;text-align:center;font-size:12px;color:#2a2a2a;letter-spacing:-0.3px">Circle</div>
<svg class="a" style="left:18px;top:112px" width="8" height="5"><path d="M0.5,0.5 H7.5 L4,4.5Z" fill="#2a2a2a"/></svg>
<svg class="a" style="left:56px;top:112px" width="8" height="5"><path d="M0.5,0.5 H7.5 L4,4.5Z" fill="#2a2a2a"/></svg>
<svg class="a" style="left:96px;top:112px" width="8" height="5"><path d="M0.5,0.5 H7.5 L4,4.5Z" fill="#2a2a2a"/></svg>
<svg class="a" style="left:119px;top:57px" width="20" height="18"><path d="M3,3 C6,3 9,5 11,7 C13,9 14,12 15,15" fill="none" stroke="#1e1e1e"/><circle cx="3" cy="3" r="1.6" fill="#fff" stroke="#1e1e1e"/><circle cx="11" cy="7" r="1.6" fill="#fff" stroke="#1e1e1e"/><circle cx="15" cy="15" r="1.6" fill="#fff" stroke="#1e1e1e"/></svg>
<svg class="a" style="left:120px;top:80px" width="18" height="17"><ellipse cx="8" cy="9" rx="8" ry="4.5" transform="rotate(-45 8 9)" fill="none" stroke="#1e1e1e" stroke-width="1.2"/><circle cx="6" cy="7" r="1.6" fill="#fff" stroke="#1e1e1e"/><circle cx="7" cy="9" r="1.6" fill="#fff" stroke="#1e1e1e"/><circle cx="14" cy="3" r="1.6" fill="#fff" stroke="#1e1e1e"/></svg>
<svg class="a" style="left:120px;top:104px" width="17" height="16"><defs><pattern id="hp" width="3" height="3" patternUnits="userSpaceOnUse" patternTransform="rotate(45)"><rect width="1.5" height="3" fill="#555"/></pattern></defs><rect x="1" y="1" width="15" height="14" fill="url(#hp)" stroke="#888"/></svg>
<svg class="a" style="left:140px;top:64px" width="8" height="5"><path d="M0.5,0.5 H7.5 L4,4.5Z" fill="#2a2a2a"/></svg>
<svg class="a" style="left:140px;top:87px" width="8" height="5"><path d="M0.5,0.5 H7.5 L4,4.5Z" fill="#2a2a2a"/></svg>
<svg class="a" style="left:140px;top:110px" width="8" height="5"><path d="M0.5,0.5 H7.5 L4,4.5Z" fill="#2a2a2a"/></svg>
<svg class="a" style="left:155px;top:58px" width="20" height="17"><g fill="#fff" stroke="#1e1e1e"><circle cx="3" cy="3" r="1.6"/><circle cx="12" cy="2" r="1.6"/><circle cx="7" cy="7" r="1.6"/><circle cx="3" cy="12" r="1.6"/><circle cx="9" cy="11" r="1.6"/><circle cx="15" cy="13" r="1.6"/></g></svg>
<svg class="a" style="left:175px;top:64px" width="8" height="5"><path d="M0.5,0.5 H7.5 L4,4.5Z" fill="#2a2a2a"/></svg>
<svg class="a" style="left:155px;top:80px" width="17" height="17"><path d="M2,5 C2,2 4,1 8,1 L14,1 C16,3 16,5 15,8 C15,12 13,14 10,15 L3,15 C2,13 2,9 2,5Z" fill="#e4e290" stroke="#8a8a40"/><path d="M5,9 V5 H12 V10 C11,8 9,8 8,10" fill="none" stroke="#606020"/></svg>
<svg class="a" style="left:153px;top:104px" width="20" height="14"><path d="M2,7 L10,2 L18,7 L10,12Z" fill="#dde8a8" stroke="#c8d490"/></svg>
<svg class="a" style="left:200px;top:58px" width="26" height="26"><rect x="10.5" y="2.5" width="10" height="10" fill="none" stroke="#1e1e1e" stroke-width="1.3"/><rect x="1.5" y="13.5" width="9" height="10" fill="none" stroke="#6a6a6a" stroke-dasharray="2,1.5"/><path d="M6,19 L14,10" stroke="#2040a0" stroke-width="1.3"/><path d="M10.5,8.5 L15,8 L14.5,12.5Z" fill="#2040a0"/></svg>
<svg class="a" style="left:243px;top:58px" width="28" height="27"><path d="M6,3 C4,10 9,12 6,22" fill="none" stroke="#a8c0d8" stroke-width="2.5"/><path d="M8,4 C12,3 18,6 24,4" fill="none" stroke="#b0c8e0" stroke-width="2"/><path d="M12,8 V24 M12,8 H22 M12,15.5 H22" stroke="#111" stroke-width="2.6" fill="none"/><path d="M1,10 H10 M1,19 H10" stroke="#9aa" stroke-dasharray="2,2"/></svg>
<div class="t" style="left:114px;top:95px;width:200px;text-align:center;font-size:12px;color:#2a2a2a;letter-spacing:-0.3px">Move</div>
<div class="t" style="left:156px;top:95px;width:200px;text-align:center;font-size:12px;color:#2a2a2a;letter-spacing:-0.3px">Power</div>
<div class="t" style="left:152px;top:108px;width:200px;text-align:center;font-size:12px;color:#2a2a2a;letter-spacing:-0.3px">Trim</div>
<svg class="a" style="left:210px;top:112px" width="8" height="5"><path d="M0.5,0.5 H7.5 L4,4.5Z" fill="#2a2a2a"/></svg>
<svg class="a" style="left:271px;top:111px" width="8" height="5"><path d="M0.5,0.5 H7.5 L4,4.5Z" fill="#2a2a2a"/></svg>
<svg class="a" style="left:284px;top:57px" width="18" height="18"><g fill="#fff" stroke="#1e1e1e" stroke-width="1.3"><rect x="1" y="1" width="3.5" height="3.5"/><rect x="7" y="1" width="3.5" height="3.5"/><rect x="13" y="1" width="3.5" height="3.5"/><rect x="1" y="7" width="3.5" height="3.5"/><rect x="7" y="7" width="3.5" height="3.5"/><rect x="13" y="7" width="3.5" height="3.5"/><rect x="1" y="13" width="3.5" height="3.5"/><rect x="7" y="13" width="3.5" height="3.5"/><rect x="13" y="13" width="3.5" height="3.5"/></g></svg>
<svg class="a" style="left:284px;top:80px" width="18" height="18"><path d="M1,1.5 H15.5 V10 L10,16" fill="none" stroke="#1e1e1e" stroke-width="1.5"/><path d="M2,4 H13 M12,6 L6,14" stroke="#888" stroke-dasharray="2,1.5"/></svg>
<svg class="a" style="left:284px;top:105px" width="20" height="10"><path d="M1,5 H8 M6,2 L9,5 L6,8 M19,5 H12 M14,2 L11,5 L14,8" fill="none" stroke="#3060d0" stroke-width="1.8"/></svg>
<svg class="a" style="left:305px;top:109px" width="8" height="5"><path d="M0.5,0.5 H7.5 L4,4.5Z" fill="#2a2a2a"/></svg>
<svg class="a" style="left:320px;top:57px" width="18" height="18"><path d="M2,12 L10,3 C12,1 15,2 16,4 C17,6 16,8 15,9 L8,15Z" fill="#f0b8c8" stroke="#d890a0"/><path d="M1,16 H16" stroke="#7a7a7a" stroke-width="1.5"/></svg>
<svg class="a" style="left:322px;top:80px" width="14" height="17"><circle cx="6.5" cy="10.5" r="5.5" fill="#2e2e2e"/><circle cx="5" cy="9" r="2" fill="#8a8a8a"/><path d="M8,5 C9,3 10,2 12,2" stroke="#606060" fill="none"/><circle cx="12" cy="2" r="1.3" fill="#f08030"/></svg>
<svg class="a" style="left:320px;top:103px" width="19" height="18"><path d="M3,7 C5,2 12,1 16,6 C17,9 15,13 12,15 L5,12Z" fill="#e0d8a0" stroke="#1e1e1e"/><circle cx="3" cy="7" r="1.6" fill="#fff" stroke="#1e1e1e"/><circle cx="5" cy="15" r="1.6" fill="#fff" stroke="#1e1e1e"/></svg>
<svg class="a" style="left:340px;top:64px" width="8" height="5"><path d="M0.5,0.5 H7.5 L4,4.5Z" fill="#2a2a2a"/></svg>
<svg class="a" style="left:340px;top:87px" width="8" height="5"><path d="M0.5,0.5 H7.5 L4,4.5Z" fill="#2a2a2a"/></svg>
<svg class="a" style="left:340px;top:110px" width="8" height="5"><path d="M0.5,0.5 H7.5 L4,4.5Z" fill="#2a2a2a"/></svg>
<svg class="a" style="left:364px;top:59px" width="26" height="24"><rect x="1.5" y="1.5" width="22" height="20" fill="#fafafa" stroke="#9a9a9a"/><text x="4" y="10" font-size="8" font-weight="bold" fill="#111" style="font-family:'Liberation Sans'">A</text><path d="M4,13 H21 M4,16 H21 M4,19 H21 M12,7 H21" stroke="#b0b0b0"/></svg>
<svg class="a" style="left:408px;top:59px" width="26" height="24"><path d="M1.5,13 L11,3 L19,10 L10,21Z" fill="none" stroke="#3a6ab0" stroke-width="1"/><path d="M13,8 L21,8 L15,15 L22,15 L12,23 L16,16 L10,16Z" fill="#f0e040" stroke="#a09020"/></svg>
<div class="t" style="left:277px;top:95px;width:200px;text-align:center;font-size:12px;color:#2a2a2a;letter-spacing:-0.3px">Text</div>
<div class="t" style="left:321px;top:95px;width:200px;text-align:center;font-size:12px;color:#2a2a2a;letter-spacing:-0.3px">Dimension</div>
<svg class="a" style="left:373px;top:112px" width="8" height="5"><path d="M0.5,0.5 H7.5 L4,4.5Z" fill="#2a2a2a"/></svg>
<svg class="a" style="left:417px;top:112px" width="8" height="5"><path d="M0.5,0.5 H7.5 L4,4.5Z" fill="#2a2a2a"/></svg>
<svg class="a" style="left:454px;top:57px" width="18" height="18"><text x="0" y="11" font-size="11" font-weight="bold" fill="#1e1e1e" style="font-family:'Liberation Sans'">A</text><path d="M4,16 L16,3" stroke="#8a7a40" stroke-width="2.5"/><path d="M4,16 L6,13" stroke="#222" stroke-width="2"/></svg>
<svg class="a" style="left:455px;top:80px" width="18" height="18"><path d="M1.5,2 V16 M1.5,15.5 H16" stroke="#3060c0"/><path d="M5,13 L15,3" stroke="#8a7a40" stroke-width="2.5"/><path d="M5,13 L7,10" stroke="#222" stroke-width="2"/></svg>
<svg class="a" style="left:455px;top:103px" width="18" height="18"><path d="M1,3 L15,17 M4,1 L17,14" stroke="#222" stroke-width="1.2"/><path d="M3,16 L16,3" stroke="#8a7a40" stroke-width="2.5"/></svg>
<svg class="a" style="left:477px;top:103px" width="18" height="18"><circle cx="5" cy="5" r="4" fill="#e0d040" stroke="#555"/><path d="M12,2 V10 M8,6 H16" stroke="#1e1e1e" stroke-width="1.3"/><path d="M7,10 V16 M4,13 H10" stroke="#1e1e1e"/></svg>
<div class="a" style="left:476px;top:57px;width:150px;height:19px;border:1px solid #b4b6bc;background:linear-gradient(#f4f4f4,#e8e8ea)"></div>
<div class="a" style="left:609px;top:58px;width:1px;height:17px;background:#d0d0d4"></div>
<svg class="a" style="left:479px;top:58px" width="18" height="17"><circle cx="8" cy="9" r="5" fill="#ddd" stroke="#c8c8c8"/></svg>
<div class="t" style="left:499px;top:61px;font-size:12px;color:#8a8a8a;">Standard</div>
<svg class="a" style="left:613px;top:64px" width="9" height="5"><path d="M0.5,0.5 H8.5 L4.5,4.5Z" fill="#b4b4b4"/></svg>
<div class="a" style="left:476px;top:80px;width:150px;height:19px;border:1px solid #b4b6bc;background:linear-gradient(#f4f4f4,#e8e8ea)"></div>
<div class="a" style="left:609px;top:81px;width:1px;height:17px;background:#d0d0d4"></div>
<svg class="a" style="left:479px;top:81px" width="18" height="17"><text x="3" y="14" font-size="12" fill="#c8c8c8" style="font-family:'Liberation Sans'">A</text></svg>
<div class="t" style="left:499px;top:84px;font-size:12px;color:#8a8a8a;">Acumuladas</div>
<svg class="a" style="left:613px;top:87px" width="9" height="5"><path d="M0.5,0.5 H8.5 L4.5,4.5Z" fill="#b4b4b4"/></svg>
<svg class="a" style="left:641px;top:58px" width="18" height="17"><path d="M1.5,5 L5,1.5 H15.5 V5 H1.5Z" fill="#eef0a8" stroke="#8a8a40"/><rect x="1.5" y="5" width="14" height="3" fill="#e0e090" stroke="#8a8a40"/><rect x="1.5" y="8" width="14" height="3" fill="#e0e090" stroke="#8a8a40"/><circle cx="11" cy="12" r="4" fill="#20c030"/></svg>
<svg class="a" style="left:662px;top:64px" width="8" height="5"><path d="M0.5,0.5 H7.5 L4,4.5Z" fill="#2a2a2a"/></svg>
<svg class="a" style="left:679px;top:57px" width="18" height="17"><path d="M1.5,6 C3,2 12,1 16,4 L16,9 L14,14 L12,9 L9,12 L6,9 L3,14 L2,9Z" fill="#eef4f8" stroke="#8a9ca8"/></svg>
<svg class="a" style="left:701px;top:64px" width="8" height="5"><path d="M0.5,0.5 H7.5 L4,4.5Z" fill="#2a2a2a"/></svg>
<svg class="a" style="left:717px;top:58px" width="18" height="17"><path d="M1.5,5 L5,1.5 H15.5 V5 H1.5Z" fill="#eef0a8" stroke="#8a8a40"/><rect x="1.5" y="5" width="14" height="3" fill="#e0e090" stroke="#8a8a40"/><rect x="1.5" y="8" width="14" height="3" fill="#e0e090" stroke="#8a8a40"/><rect x="8" y="7" width="8" height="8" fill="#e8e490" stroke="#707030"/><path d="M9,7 V4 H14 V7" fill="none" stroke="#404040"/></svg>
<svg class="a" style="left:739px;top:64px" width="8" height="5"><path d="M0.5,0.5 H7.5 L4,4.5Z" fill="#2a2a2a"/></svg>
<svg class="a" style="left:754px;top:58px" width="18" height="17"><path d="M1.5,5 L5,1.5 H15.5 V5 H1.5Z" fill="#eef0a8" stroke="#8a8a40"/><rect x="1.5" y="5" width="14" height="3" fill="#dde0a0" stroke="#9a9a60"/><rect x="1.5" y="9" width="14" height="3" fill="#d8d8d8" stroke="#b0b0b0"/><rect x="1.5" y="12" width="14" height="3" fill="#d0d0d0" stroke="#b8b8b8"/></svg>
<svg class="a" style="left:774px;top:64px" width="8" height="5"><path d="M0.5,0.5 H7.5 L4,4.5Z" fill="#2a2a2a"/></svg>
<svg class="a" style="left:790px;top:56px" width="20" height="20"><path d="M2,11 L7,18 L18,2" fill="none" stroke="#4a6060" stroke-width="3"/><path d="M2,11 L7,18 L18,2" fill="none" stroke="#c8dcdc" stroke-width="1"/></svg>
<svg class="a" style="left:812px;top:64px" width="8" height="5"><path d="M0.5,0.5 H7.5 L4,4.5Z" fill="#2a2a2a"/></svg>
<svg class="a" style="left:640px;top:80px" width="18" height="18"><path d="M1.5,9 L5,5.5 H15.5 V9 H1.5Z" fill="#eef0a8" stroke="#8a8a40"/><rect x="1.5" y="9" width="14" height="3" fill="#e0e090" stroke="#8a8a40"/><rect x="1.5" y="12" width="14" height="4" fill="#e0e090" stroke="#8a8a40"/><path d="M4,8 L10,2 L15,5" fill="none" stroke="#c08060" stroke-width="2"/></svg>
<svg class="a" style="left:678px;top:80px" width="18" height="18"><path d="M1.5,5 L5,1.5 H15.5 V5 H1.5Z" fill="#eef0a8" stroke="#8a8a40"/><rect x="1.5" y="5" width="14" height="6" fill="#e0e090" stroke="#8a8a40"/><circle cx="9" cy="9" r="4.5" fill="#e8eef4" stroke="#404040" stroke-width="1.3"/><path d="M12,12 L16,16" stroke="#404040" stroke-width="2"/></svg>
<svg class="a" style="left:716px;top:81px" width="18" height="17"><path d="M1.5,5 L5,1.5 H15.5 V5 H1.5Z" fill="#eef0a8" stroke="#8a8a40"/><rect x="1.5" y="5" width="14" height="3" fill="#e0e090" stroke="#8a8a40"/><rect x="1.5" y="8" width="14" height="3" fill="#e0e090" stroke="#8a8a40"/><rect x="6.5" y="9.5" width="10" height="7" fill="#f4f4f4" stroke="#606060"/><path d="M8,12 H15 M8,14 H13" stroke="#6a6ab0"/></svg>
<div class="a" style="left:638px;top:102px;width:186px;height:19px;border:1px solid #b4b6bc;background:linear-gradient(#f4f4f4,#e8e8ea)"></div>
<div class="a" style="left:808px;top:103px;width:1px;height:17px;background:#d0d0d4"></div>
<svg class="a" style="left:644px;top:105px" width="60" height="14"><circle cx="6" cy="7" r="4" fill="#b8b8b8"/><path d="M15,8 C18,5 28,5 30,6 L29,9 C25,10 19,10 15,9Z" fill="#eee" stroke="#c8c8c8"/><path d="M38,8 V4 C38,2 43,2 43,4 V6" fill="none" stroke="#b8b8b8"/><rect x="41" y="6" width="7" height="7" fill="#e4e4e4" stroke="#b8b8b8"/></svg>
<svg class="a" style="left:703px;top:104px" width="16" height="16"><circle cx="8" cy="8" r="6" fill="#fff" stroke="#6a6a6a"/></svg>
<div class="t" style="left:724px;top:106px;font-size:12px;color:#9a9a9a;">0</div>
<svg class="a" style="left:812px;top:109px" width="9" height="5"><path d="M0.5,0.5 H8.5 L4.5,4.5Z" fill="#b4b4b4"/></svg>
<svg class="a" style="left:838px;top:56px" width="20" height="19"><circle cx="8" cy="8" r="5" fill="#e0e0e8" stroke="#404050"/><circle cx="9" cy="12" r="5" fill="#6a70b8" stroke="#303060"/><path d="M15,14 L19,4" stroke="#80a040" stroke-width="2"/></svg>
<svg class="a" style="left:839px;top:81px" width="17" height="16"><rect x="1" y="1" width="15" height="2" fill="#111"/><g fill="#111"><rect x="1" y="5" width="3" height="2"/><rect x="5" y="5" width="3" height="2"/><rect x="9" y="5" width="3" height="2"/><rect x="13" y="5" width="3" height="2"/><rect x="1" y="9" width="2" height="2"/><rect x="4" y="9" width="2" height="2"/><rect x="7" y="9" width="2" height="2"/><rect x="10" y="9" width="2" height="2"/><rect x="13" y="9" width="3" height="2"/><rect x="1" y="13" width="3" height="2"/><rect x="6" y="13" width="4" height="2"/><rect x="12" y="13" width="4" height="2"/></g></svg>
<svg class="a" style="left:839px;top:104px" width="17" height="16"><rect x="1" y="1" width="15" height="4" fill="#111"/><rect x="1" y="7" width="15" height="3" fill="#111"/><rect x="1" y="11.5" width="15" height="2" fill="#111"/><rect x="1" y="14.5" width="15" height="1" fill="#111"/></svg>
<div class="a" style="left:860px;top:57px;width:150px;height:19px;border:1px solid #b4b6bc;background:linear-gradient(#f4f4f4,#e8e8ea)"></div>
<div class="a" style="left:993px;top:58px;width:1px;height:17px;background:#d0d0d4"></div>
<svg class="a" style="left:866px;top:61px" width="12" height="12"><circle cx="6" cy="6" r="5" fill="none" stroke="#8a8a8a"/></svg><div class="t" style="left:883px;top:61px;font-size:12px;color:#8a8a8a">ByLayer</div>
<svg class="a" style="left:997px;top:64px" width="9" height="5"><path d="M0.5,0.5 H8.5 L4.5,4.5Z" fill="#b4b4b4"/></svg>
<div class="a" style="left:860px;top:80px;width:150px;height:19px;border:1px solid #b4b6bc;background:linear-gradient(#f4f4f4,#e8e8ea)"></div>
<div class="a" style="left:993px;top:81px;width:1px;height:17px;background:#d0d0d4"></div>
<div class="t" style="left:863px;top:84px;font-size:12px;color:#8a8a8a">ByLayer &nbsp;&nbsp;&nbsp;Solid line</div>
<svg class="a" style="left:997px;top:87px" width="9" height="5"><path d="M0.5,0.5 H8.5 L4.5,4.5Z" fill="#b4b4b4"/></svg>
<div class="a" style="left:860px;top:103px;width:150px;height:19px;border:1px solid #b4b6bc;background:linear-gradient(#f4f4f4,#e8e8ea)"></div>
<div class="a" style="left:993px;top:104px;width:1px;height:17px;background:#d0d0d4"></div>
<div class="a" style="left:864px;top:113px;width:32px;height:1px;background:#555"></div><div class="t" style="left:899px;top:107px;font-size:12px;color:#8a8a8a">ByLayer</div>
<svg class="a" style="left:997px;top:110px" width="9" height="5"><path d="M0.5,0.5 H8.5 L4.5,4.5Z" fill="#b4b4b4"/></svg>
<svg class="a" style="left:1013px;top:57px" width="18" height="18"><rect x="2" y="2" width="3" height="14" fill="#e03040"/><rect x="7" y="2" width="3" height="14" fill="#30b050"/><path d="M12,16 V2 H15 V16Z" fill="#90b0d8"/><path d="M12,6 L15,3 M12,10 L15,7 M12,14 L15,11" stroke="#4070b0"/></svg>
<svg class="a" style="left:1014px;top:80px" width="18" height="18"><path d="M1.5,5 L5,1.5 H15.5 V5 H1.5Z" fill="#eef0a8" stroke="#8a8a40"/><rect x="1.5" y="5" width="14" height="11" fill="#e0e090" stroke="#8a8a40"/><rect x="8" y="9" width="8" height="8" fill="#888"/><rect x="12" y="13" width="4" height="4" fill="#fff"/><rect x="8" y="9" width="4" height="4" fill="#fff"/></svg>
<svg class="a" style="left:1034px;top:87px" width="8" height="5"><path d="M0.5,0.5 H7.5 L4,4.5Z" fill="#2a2a2a"/></svg>
<div class="a" style="left:1046px;top:57px;width:150px;height:19px;border:1px solid #b4b6bc;background:linear-gradient(#f4f4f4,#e8e8ea)"></div>
<div class="a" style="left:1179px;top:58px;width:1px;height:17px;background:#d0d0d4"></div>
<div class="t" style="left:1049px;top:61px;font-size:12px;color:#8a8a8a;">ByColor</div>
<svg class="a" style="left:1183px;top:64px" width="9" height="5"><path d="M0.5,0.5 H8.5 L4.5,4.5Z" fill="#b4b4b4"/></svg>
<div class="a" style="left:1055px;top:86px;width:112px;height:2px;background:#d4d4d4;border-bottom:1px solid #fff"></div>
<div class="a" style="left:1046px;top:80px;width:10px;height:17px;border:1px solid #9a9a9a;border-radius:2px;background:linear-gradient(90deg,#f4f4f4,#d8d8d8)"></div>
<div class="a" style="left:1171px;top:79px;width:25px;height:20px;border:1px solid #c4c4c4;background:#fff"></div>
<div class="t" style="left:1179px;top:83px;font-size:12px;color:#1e1e1e;">0</div>
<svg class="a" style="left:1048px;top:104px" width="18" height="17"><g><rect x="1" y="1" width="3" height="3" fill="#30a060"/><rect x="6" y="1" width="3" height="3" fill="#c02030"/><rect x="11" y="1" width="3" height="3" fill="#30a060"/><rect x="1" y="6" width="8" height="1.5" fill="#2040a0" stroke-dasharray="1,1"/><rect x="1" y="9" width="3" height="2" fill="#c02030"/><rect x="6" y="9" width="3" height="2" fill="#c02030"/><rect x="1" y="12" width="8" height="1.5" fill="#30a060"/></g><text x="9" y="17" font-size="10" font-weight="bold" fill="#1a1a1a" style="font-family:'Liberation Sans'">A</text></svg>
<svg class="a" style="left:1072px;top:104px" width="16" height="17"><path d="M2,15 L13,3" stroke="#a89048" stroke-width="3"/><path d="M2,15 L5,11" stroke="#222" stroke-width="2.5"/></svg>
<svg class="a" style="left:1095px;top:104px" width="14" height="17"><path d="M1.5,1.5 H9 L12.5,5 V15.5 H1.5Z" fill="#f8f8f8" stroke="#9a9a9a"/><path d="M3.5,6 H10 M3.5,8 H10 M3.5,10 H10 M3.5,12 H10" stroke="#c0c0c0"/></svg>
<svg class="a" style="left:1217px;top:59px" width="26" height="26"><rect x="1.5" y="1.5" width="22" height="22" fill="#e8e8e8" stroke="#8a8a8a" stroke-width="2"/><rect x="4" y="4" width="17" height="17" fill="#f4f4f4" stroke="#c8c8c8"/><path d="M7,9 C8,5 16,5 17,9 C18,14 13,15 10,14" fill="none" stroke="#b0b8c0"/><path d="M13,22 L22,13 L22,22Z" fill="#d8d840"/></svg>
<div class="t" style="left:1129px;top:95px;width:200px;text-align:center;font-size:12px;color:#2a2a2a;letter-spacing:-0.3px">Quick</div>
<div class="t" style="left:1129px;top:108px;width:200px;text-align:center;font-size:12px;color:#2a2a2a;letter-spacing:-0.3px">Group</div>
<svg class="a" style="left:1253px;top:57px" width="18" height="18"><rect x="2.5" y="2.5" width="13" height="13" fill="none" stroke="#1e1e1e" stroke-width="1.3"/><circle cx="2.5" cy="2.5" r="1.8" fill="#e4e060" stroke="#333"/><circle cx="15.5" cy="2.5" r="1.8" fill="#e4e060" stroke="#333"/><circle cx="2.5" cy="15.5" r="1.8" fill="#e4e060" stroke="#333"/><circle cx="8" cy="8" r="4" fill="none" stroke="#4a8a9a"/><path d="M11,11 L16,16 M16,11 L11,16" stroke="#d02020" stroke-width="1.8"/></svg>
<svg class="a" style="left:1253px;top:80px" width="18" height="18"><rect x="2.5" y="2.5" width="13" height="13" fill="none" stroke="#1e1e1e" stroke-width="1.3"/><g fill="#e4e060" stroke="#333"><circle cx="2.5" cy="2.5" r="1.8"/><circle cx="15.5" cy="2.5" r="1.8"/><circle cx="2.5" cy="15.5" r="1.8"/><circle cx="15.5" cy="15.5" r="1.8"/></g><circle cx="8" cy="8" r="4" fill="none" stroke="#4a8a9a"/><path d="M5,14 L14,5" stroke="#c8a040" stroke-width="2"/></svg>
<svg class="a" style="left:1254px;top:103px" width="17" height="17"><rect x="1.5" y="1.5" width="14" height="14" fill="none" stroke="#1e1e1e" stroke-width="1.5" stroke-dasharray="2,1.5"/><rect x="5" y="6" width="8" height="7" fill="none" stroke="#4a8a9a"/><circle cx="9" cy="7" r="3" fill="none" stroke="#4a8a9a"/></svg>
<div class="a" style="left:0;top:146px;width:197px;height:28px;background:#fff;border-right:1px solid #d0d0d0;border-left:1px solid #b0b0b0"></div>
<div class="t" style="left:36px;top:151px;font-size:12px;color:#1e1e1e;letter-spacing:-0.4px">LayersStateEnd.dwg*</div>
<svg class="a" style="left:173px;top:151px" width="12" height="12"><path d="M1.5,1.5 L10.5,10.5 M10.5,1.5 L1.5,10.5" stroke="#1e1e1e" stroke-width="2"/></svg>
<div class="a" style="left:198px;top:146px;width:28px;height:22px;border:1px solid #8a8a8a;border-radius:3px;background:linear-gradient(#fafafa,#dcdcdc)"></div>
<svg class="a" style="left:205px;top:150px" width="14" height="14"><path d="M7,1.5 V12.5 M1.5,7 H12.5" stroke="#333" stroke-width="1.6"/></svg>
<div class="a" style="left:1918px;top:0;width:1px;height:1080px;background:#555"></div><div class="a" style="left:1919px;top:0;width:1px;height:1080px;background:#e8e8e8"></div>
<svg class="a" style="left:0px;top:943px" width="180" height="18"><path d="M2,0 C4,6 6,15 12,15.5 H46 C50,15.5 51,10 55,0" fill="#fff" stroke="#5a5a5a"/><path d="M57,0 C59,6 62,14 66,15 H102 C107,15 108,8 112,0" fill="#d4d4d4" stroke="#5a5a5a"/><path d="M114,0 C116,6 118,14 122,15 H162 C167,15 168,8 172,0" fill="#d4d4d4" stroke="#5a5a5a"/></svg>
<div class="t" style="left:11px;top:945px;font-size:12px;color:#2a2a2a;letter-spacing:-0.3px">Model</div>
<div class="t" style="left:63px;top:944px;font-size:12px;color:#2a2a2a;letter-spacing:-0.4px">Page01</div>
<div class="t" style="left:123px;top:944px;font-size:12px;color:#2a2a2a;letter-spacing:-0.4px">Page02</div>
<div class="t" style="left:4px;top:967px;font-size:12px;color:#1e1e2e;font-weight:bold;letter-spacing:-0.3px">Command window</div>
<svg class="a" style="left:1902px;top:967px" width="12" height="12"><path d="M1.5,1.5 L10.5,10.5 M10.5,1.5 L1.5,10.5" stroke="#111" stroke-width="2"/></svg>
<div class="a" style="left:1px;top:986px;width:300px;height:14px;overflow:hidden"><div class="t" style="left:4px;top:-4px;font-size:12px;letter-spacing:0.35px;color:#2a2a2a;line-height:16px">Rebuilding viewports...</div></div>
<div class="a" style="left:6px;top:1003px;width:2px;height:1px;background:#888"></div>
<div class="a" style="left:6px;top:1010px;width:2px;height:1px;background:#888"></div>
<div class="a" style="left:6px;top:1018px;width:2px;height:1px;background:#888"></div>
<div class="a" style="left:6px;top:1025px;width:2px;height:1px;background:#888"></div>
<div class="a" style="left:1903px;top:986px;width:15px;height:47px;background:#f4f4f4"></div>
<svg class="a" style="left:1906px;top:993px" width="9" height="6"><path d="M0.5,5 L4.5,1 L8.5,5Z" fill="#404040"/></svg>
<div class="a" style="left:1903px;top:1006px;width:14px;height:8px;border:1px solid #9a9a9a;background:#e8e8e8"></div>
<svg class="a" style="left:1906px;top:1021px" width="9" height="6"><path d="M0.5,1 L4.5,5 L8.5,1Z" fill="#404040"/></svg>
<div class="t" style="left:4px;top:1036px;font-size:13px;color:#1e1e1e;">: _LAYERSTATE</div>
<div class="t" style="left:2px;top:1061px;font-size:11px;color:#1e1e1e;letter-spacing:0px">ARES Commander 2016 x64</div>
<div class="a" style="left:660px;top:1055px;width:37px;height:19px;border:1px solid #8a8a8a;border-radius:2px;background:linear-gradient(#fcfcfc,#e8e8e8)"></div>
<div class="t" style="left:578.5px;top:1059px;width:200px;text-align:center;font-size:12px;color:#1e1e1e;letter-spacing:-0.3px">Snap</div>
<div class="a" style="left:705px;top:1055px;width:33px;height:19px;border:1px solid #8a8a8a;border-radius:2px;background:linear-gradient(#fcfcfc,#e8e8e8)"></div>
<div class="t" style="left:621.5px;top:1059px;width:200px;text-align:center;font-size:12px;color:#1e1e1e;letter-spacing:-0.3px">Grid</div>
<div class="a" style="left:746px;top:1055px;width:42px;height:19px;border:1px solid #6a8aaa;border-radius:2px;background:linear-gradient(#c4dcf0,#a8c8e4)"></div>
<div class="t" style="left:667.0px;top:1059px;width:200px;text-align:center;font-size:12px;color:#1e1e1e;letter-spacing:-0.3px">Ortho</div>
<div class="a" style="left:798px;top:1055px;width:37px;height:19px;border:1px solid #8a8a8a;border-radius:2px;background:linear-gradient(#fcfcfc,#e8e8e8)"></div>
<div class="t" style="left:716.5px;top:1059px;width:200px;text-align:center;font-size:12px;color:#1e1e1e;letter-spacing:-0.3px">Polar</div>
<div class="a" style="left:843px;top:1055px;width:43px;height:19px;border:1px solid #6a8aaa;border-radius:2px;background:linear-gradient(#c4dcf0,#a8c8e4)"></div>
<div class="t" style="left:764.5px;top:1059px;width:200px;text-align:center;font-size:12px;color:#1e1e1e;letter-spacing:-0.3px">ESnap</div>
<div class="a" style="left:894px;top:1055px;width:45px;height:19px;border:1px solid #6a8aaa;border-radius:2px;background:linear-gradient(#c4dcf0,#a8c8e4)"></div>
<div class="t" style="left:816.5px;top:1059px;width:200px;text-align:center;font-size:12px;color:#1e1e1e;letter-spacing:-0.3px">ETrack</div>
<div class="a" style="left:947px;top:1055px;width:48px;height:19px;border:1px solid #6a8aaa;border-radius:2px;background:linear-gradient(#c4dcf0,#a8c8e4)"></div>
<div class="t" style="left:871.0px;top:1059px;width:200px;text-align:center;font-size:12px;color:#1e1e1e;letter-spacing:-0.3px">QInput</div>
<div class="a" style="left:1003px;top:1055px;width:55px;height:19px;border:1px solid #8a8a8a;border-radius:2px;background:linear-gradient(#fcfcfc,#e8e8e8)"></div>
<div class="t" style="left:930.5px;top:1059px;width:200px;text-align:center;font-size:12px;color:#1e1e1e;letter-spacing:-0.3px">LWeight</div>
<div class="a" style="left:1066px;top:1055px;width:51px;height:19px;border:1px solid #6a8aaa;border-radius:2px;background:linear-gradient(#c4dcf0,#a8c8e4)"></div>
<div class="t" style="left:991.5px;top:1059px;width:200px;text-align:center;font-size:12px;color:#1e1e1e;letter-spacing:-0.3px">MODEL</div>
<div class="a" style="left:1127px;top:1055px;width:94px;height:20px;border:1px solid #8a8a8a;border-radius:2px;background:linear-gradient(#fcfcfc,#e8e8e8)"></div>
<div class="t" style="left:1131px;top:1059px;font-size:12px;color:#1e1e1e;">Annotation</div>
<svg class="a" style="left:1202px;top:1062px" width="9" height="6"><path d="M0.5,0.5 H8.5 L4.5,5Z" fill="#111"/></svg>
<div class="t" style="left:1228px;top:1059px;font-size:12px;color:#1e1e1e;letter-spacing:-0.3px">(1:100)</div>
<div class="t" style="left:1270px;top:1059px;font-size:12px;color:#1e1e1e;letter-spacing:-0.3px">(-10.1082,12.0481,0.0000)</div>
<div class="a" style="left:805px;top:358px;width:745px;height:477px;border:1px solid #9a9a9a;border-radius:6px 6px 0 0;background:linear-gradient(#4e4e4e,#2c2c2c 40px,#222 100%);box-shadow:0 0 8px rgba(0,0,0,.6)"></div>
<div class="a" style="left:806px;top:359px;width:743px;height:1px;background:#777"></div>
<svg class="a" style="left:814px;top:363px" width="16" height="16"><rect x="1" y="1" width="14" height="14" rx="2" fill="#3a3a3a"/><path d="M3,13 C4,8 8,3 13,3 C12,8 9,12 3,13Z" fill="#e0204a"/><path d="M5,11 L11,5 M6,12 L12,6" stroke="#ff6080" stroke-width="1"/></svg>
<div class="a" style="left:828px;top:363px;width:90px;height:17px;background:rgba(200,200,202,.45);filter:blur(5px);border-radius:8px"></div>
<div class="t" style="left:833px;top:366px;font-size:12px;color:#1a1a1a">Layer States M</div>
<div class="a" style="left:1497px;top:358px;width:48px;height:20px;border:1px solid #8a8a8a;border-top:none;border-radius:0 0 5px 5px;background:linear-gradient(#3a3a3a,#262626)"></div>
<svg class="a" style="left:1515px;top:362px" width="12" height="11"><path d="M2,1.5 L10,9.5 M10,1.5 L2,9.5" stroke="#f4f4f4" stroke-width="2.4"/></svg>
<div class="a" style="left:811px;top:386px;width:733px;height:443px;background:#f0f0f0;border:1px solid #5a5a5a"></div>
<div class="a" style="left:824px;top:412px;width:100px;height:265px;border:1px solid #dcdcdc;border-radius:3px"></div>
<div class="a" style="left:824px;top:697px;width:100px;height:60px;border:1px solid #dcdcdc;border-radius:3px"></div>
<div class="t" style="left:831px;top:399px;font-size:11.5px;letter-spacing:-0.4px;color:#1a1a1a;background:#f0f0f0;padding-right:2px">Layer properties</div>
<div class="t" style="left:831px;top:685px;font-size:11.5px;letter-spacing:-0.4px;color:#1a1a1a;background:#f0f0f0;padding-right:2px">Options</div>
<div class="a" style="left:833px;top:424px;width:13px;height:13px;border:1px solid #8e8f8f;background:linear-gradient(#e8e8e8,#fafafa)"></div>
<svg class="a" style="left:835px;top:426px" width="10" height="10"><path d="M1.5,5 L4,8.5 L8.5,1" fill="none" stroke="#4a4a7a" stroke-width="1.7"/></svg>
<div class="t" style="left:850px;top:425px;font-size:11.5px;letter-spacing:-0.5px;color:#1a1a1a">Show / Hide</div>
<div class="a" style="left:833px;top:447px;width:13px;height:13px;border:1px solid #8e8f8f;background:linear-gradient(#e8e8e8,#fafafa)"></div>
<svg class="a" style="left:835px;top:449px" width="10" height="10"><path d="M1.5,5 L4,8.5 L8.5,1" fill="none" stroke="#4a4a7a" stroke-width="1.7"/></svg>
<div class="t" style="left:850px;top:448px;font-size:11.5px;letter-spacing:-0.5px;color:#1a1a1a">Frozen / Th</div>
<div class="a" style="left:833px;top:470px;width:13px;height:13px;border:1px solid #8e8f8f;background:linear-gradient(#e8e8e8,#fafafa)"></div>
<svg class="a" style="left:835px;top:472px" width="10" height="10"><path d="M1.5,5 L4,8.5 L8.5,1" fill="none" stroke="#4a4a7a" stroke-width="1.7"/></svg>
<div class="t" style="left:850px;top:471px;font-size:11.5px;letter-spacing:-0.5px;color:#1a1a1a">Locked / Un</div>
<div class="a" style="left:833px;top:493px;width:13px;height:13px;border:1px solid #8e8f8f;background:linear-gradient(#e8e8e8,#fafafa)"></div>
<svg class="a" style="left:835px;top:495px" width="10" height="10"><path d="M1.5,5 L4,8.5 L8.5,1" fill="none" stroke="#4a4a7a" stroke-width="1.7"/></svg>
<div class="t" style="left:850px;top:494px;font-size:11.5px;letter-spacing:-0.5px;color:#1a1a1a">LineColor</div>
<div class="a" style="left:833px;top:516px;width:13px;height:13px;border:1px solid #8e8f8f;background:linear-gradient(#e8e8e8,#fafafa)"></div>
<svg class="a" style="left:835px;top:518px" width="10" height="10"><path d="M1.5,5 L4,8.5 L8.5,1" fill="none" stroke="#4a4a7a" stroke-width="1.7"/></svg>
<div class="t" style="left:850px;top:517px;font-size:11.5px;letter-spacing:-0.5px;color:#1a1a1a">LineStyle</div>
<div class="a" style="left:833px;top:539px;width:13px;height:13px;border:1px solid #8e8f8f;background:linear-gradient(#e8e8e8,#fafafa)"></div>
<svg class="a" style="left:835px;top:541px" width="10" height="10"><path d="M1.5,5 L4,8.5 L8.5,1" fill="none" stroke="#4a4a7a" stroke-width="1.7"/></svg>
<div class="t" style="left:850px;top:540px;font-size:11.5px;letter-spacing:-0.5px;color:#1a1a1a">LineWeight</div>
<div class="a" style="left:833px;top:562px;width:13px;height:13px;border:1px solid #8e8f8f;background:linear-gradient(#e8e8e8,#fafafa)"></div>
<svg class="a" style="left:835px;top:564px" width="10" height="10"><path d="M1.5,5 L4,8.5 L8.5,1" fill="none" stroke="#4a4a7a" stroke-width="1.7"/></svg>
<div class="t" style="left:850px;top:563px;font-size:11.5px;letter-spacing:-0.5px;color:#1a1a1a">PrintStyle</div>
<div class="a" style="left:833px;top:585px;width:13px;height:13px;border:1px solid #8e8f8f;background:linear-gradient(#e8e8e8,#fafafa)"></div>
<svg class="a" style="left:835px;top:587px" width="10" height="10"><path d="M1.5,5 L4,8.5 L8.5,1" fill="none" stroke="#4a4a7a" stroke-width="1.7"/></svg>
<div class="t" style="left:850px;top:586px;font-size:11.5px;letter-spacing:-0.5px;color:#1a1a1a">Transparen</div>
<div class="a" style="left:833px;top:608px;width:13px;height:13px;border:1px solid #8e8f8f;background:linear-gradient(#e8e8e8,#fafafa)"></div>
<svg class="a" style="left:835px;top:610px" width="10" height="10"><path d="M1.5,5 L4,8.5 L8.5,1" fill="none" stroke="#4a4a7a" stroke-width="1.7"/></svg>
<div class="t" style="left:850px;top:609px;font-size:11.5px;letter-spacing:-0.5px;color:#1a1a1a">Print / No p</div>
<div class="a" style="left:833px;top:631px;width:13px;height:13px;border:1px solid #8e8f8f;background:linear-gradient(#e8e8e8,#fafafa)"></div>
<svg class="a" style="left:835px;top:633px" width="10" height="10"><path d="M1.5,5 L4,8.5 L8.5,1" fill="none" stroke="#4a4a7a" stroke-width="1.7"/></svg>
<div class="t" style="left:850px;top:632px;font-size:11.5px;letter-spacing:-0.5px;color:#1a1a1a">New ViewPo</div>
<div class="a" style="left:833px;top:654px;width:13px;height:13px;border:1px solid #c0c0c0;background:linear-gradient(#e8e8e8,#fafafa)"></div>
<svg class="a" style="left:835px;top:656px" width="10" height="10"><path d="M1.5,5 L4,8.5 L8.5,1" fill="none" stroke="#b8b8c0" stroke-width="1.7"/></svg>
<div class="t" style="left:850px;top:655px;font-size:11.5px;letter-spacing:-0.5px;color:#a0a0a0">Active View</div>
<div class="a" style="left:833px;top:710px;width:13px;height:13px;border:1px solid #8e8f8f;background:linear-gradient(#e8e8e8,#fafafa)"></div>
<svg class="a" style="left:835px;top:712px" width="10" height="10"><path d="M1.5,5 L4,8.5 L8.5,1" fill="none" stroke="#4a4a7a" stroke-width="1.7"/></svg>
<div class="t" style="left:850px;top:711px;font-size:11.5px;letter-spacing:-0.5px;color:#1a1a1a">Hide layers</div>
<div class="a" style="left:833px;top:733px;width:13px;height:13px;border:1px solid #c0c0c0;background:linear-gradient(#e8e8e8,#fafafa)"></div>
<svg class="a" style="left:835px;top:735px" width="10" height="10"><path d="M1.5,5 L4,8.5 L8.5,1" fill="none" stroke="#b8b8c0" stroke-width="1.7"/></svg>
<div class="t" style="left:850px;top:734px;font-size:11.5px;letter-spacing:-0.5px;color:#a0a0a0">Set propert</div>
<div class="a" style="left:1454px;top:426px;width:78px;height:21px;border:1px solid #3c9fd8;border-radius:3px;background:linear-gradient(#eef7fc,#dcebf5 50%,#c8e0f0 51%,#bcd8ee);box-shadow:inset 0 0 0 1px rgba(255,255,255,.7)"></div>
<svg class="a" style="left:1473px;top:428px" width="16" height="16"><circle cx="8" cy="8" r="7" fill="#30b040" stroke="#208030"/><path d="M8,4 V12 M4,8 H12" stroke="#fff" stroke-width="2.2"/></svg>
<div class="t" style="left:1493px;top:431px;font-size:12px;letter-spacing:-0.3px;color:#1a1a1a">Add</div>
<div class="a" style="left:1454px;top:456px;width:78px;height:21px;border:1px solid #707070;border-radius:3px;background:linear-gradient(#f2f2f2,#ebebeb 50%,#dddddd 51%,#cfcfcf);box-shadow:inset 0 0 0 1px rgba(255,255,255,.7)"></div>
<svg class="a" style="left:1467px;top:458px" width="16" height="16"><circle cx="8" cy="8" r="7" fill="#e0507a" stroke="#b83a60"/><path d="M5.5,5.5 L10.5,10.5 M10.5,5.5 L5.5,10.5" stroke="#fff" stroke-width="2"/></svg>
<div class="t" style="left:1484px;top:461px;font-size:12px;letter-spacing:-0.3px;color:#1a1a1a">Delete</div>
<div class="a" style="left:1454px;top:486px;width:78px;height:21px;border:1px solid #707070;border-radius:3px;background:linear-gradient(#f2f2f2,#ebebeb 50%,#dddddd 51%,#cfcfcf);box-shadow:inset 0 0 0 1px rgba(255,255,255,.7)"></div>
<svg class="a" style="left:1470px;top:488px" width="16" height="16"><rect x="1" y="1" width="14" height="14" fill="#3a62b0" stroke="#23407a"/><rect x="4" y="1.5" width="8" height="5" fill="#e8eef8"/><rect x="4" y="10" width="8" height="5" fill="#c8d4e8"/></svg>
<div class="t" style="left:1490px;top:491px;font-size:12px;letter-spacing:-0.3px;color:#1a1a1a">Save</div>
<div class="a" style="left:1454px;top:516px;width:78px;height:21px;border:1px solid #707070;border-radius:3px;background:linear-gradient(#f2f2f2,#ebebeb 50%,#dddddd 51%,#cfcfcf);box-shadow:inset 0 0 0 1px rgba(255,255,255,.7)"></div>
<svg class="a" style="left:1462px;top:517px" width="20" height="18"><path d="M2,14 L9,6 L16,6 L9,14Z" fill="#e8e8a0" stroke="#8a8a30"/><rect x="7" y="8" width="11" height="9" fill="#f4f4e0" stroke="#909060"/><path d="M3,16 L15,2" stroke="#7a7a20" stroke-width="2"/></svg>
<div class="t" style="left:1487px;top:521px;font-size:12px;letter-spacing:-0.3px;color:#1a1a1a">Edit...</div>
<div class="a" style="left:1454px;top:546px;width:78px;height:21px;border:1px solid #707070;border-radius:3px;background:linear-gradient(#f2f2f2,#ebebeb 50%,#dddddd 51%,#cfcfcf);box-shadow:inset 0 0 0 1px rgba(255,255,255,.7)"></div>
<svg class="a" style="left:1460px;top:547px" width="20" height="18"><path d="M1,14 L6,10 L18,10 L13,14Z" fill="#e8e8a0" stroke="#8a8a30"/><path d="M1,11 L6,7 L18,7 L13,11Z" fill="#eef0a8" stroke="#8a8a30"/><path d="M14,6 C13,2 8,2 6,5 L8,6 L3,7 L4,3 L6,4" fill="#e0c040" stroke="#908020"/></svg>
<div class="t" style="left:1480px;top:551px;font-size:12px;letter-spacing:-0.3px;color:#1a1a1a">Import...</div>
<div class="a" style="left:1454px;top:576px;width:78px;height:21px;border:1px solid #707070;border-radius:3px;background:linear-gradient(#f2f2f2,#ebebeb 50%,#dddddd 51%,#cfcfcf);box-shadow:inset 0 0 0 1px rgba(255,255,255,.7)"></div>
<svg class="a" style="left:1460px;top:577px" width="20" height="18"><path d="M1,14 L6,10 L18,10 L13,14Z" fill="#e8e8a0" stroke="#8a8a30"/><path d="M1,11 L6,7 L18,7 L13,11Z" fill="#eef0a8" stroke="#8a8a30"/><path d="M14,6 C13,2 8,2 6,5 L8,6 L3,7 L4,3 L6,4" fill="#e0c040" stroke="#908020"/></svg>
<div class="t" style="left:1480px;top:581px;font-size:12px;letter-spacing:-0.3px;color:#1a1a1a">Export...</div>
<div class="a" style="left:1454px;top:606px;width:78px;height:21px;border:1px solid #707070;border-radius:3px;background:linear-gradient(#f2f2f2,#ebebeb 50%,#dddddd 51%,#cfcfcf);box-shadow:inset 0 0 0 1px rgba(255,255,255,.7)"></div>
<svg class="a" style="left:1463px;top:610px" width="18" height="14"><path d="M1,5 H9 V1.5 L16,7 L9,12.5 V9 H1Z" fill="#e8e020" stroke="#6a6a10" stroke-width="1.2"/></svg>
<div class="t" style="left:1483px;top:611px;font-size:12px;letter-spacing:-0.3px;color:#1a1a1a">Activate</div>
<div class="a" style="left:1459px;top:796px;width:73px;height:21px;border:1px solid #707070;border-radius:3px;background:linear-gradient(#f2f2f2,#ebebeb 50%,#dddddd 51%,#cfcfcf);box-shadow:inset 0 0 0 1px rgba(255,255,255,.7)"></div>
<svg class="a" style="left:1477px;top:798px" width="16" height="16"><rect x="0.5" y="0.5" width="15" height="15" rx="1" fill="#7890c8" stroke="#5a6ea8"/><text x="4" y="13" font-size="13" font-weight="bold" fill="#e8eef8" style="font-family:'Liberation Sans'">?</text></svg>
<div class="t" style="left:1495px;top:801px;font-size:12px;letter-spacing:-0.3px;color:#1a1a1a">Help</div>
<div class="a" style="left:897px;top:380px;width:11px;height:462px;background:linear-gradient(90deg,rgba(0,0,0,0),rgba(0,0,0,.22))"></div>
<div class="a" style="left:1449px;top:386px;width:22px;height:443px;background:linear-gradient(90deg,rgba(0,0,0,.35),rgba(0,0,0,0))"></div>
<div class="a" style="left:907px;top:353px;width:542px;height:488px;border:1px solid #c8c8cc;border-radius:7px 7px 2px 2px;background:linear-gradient(#9a9ca2,#6e7076 12px,#5a5c62 22px,#7a7c82 27px,#b4b8c0 28px,#c4c8d2 100%)"></div>
<div class="a" style="left:908px;top:354px;width:540px;height:26px;border-radius:6px 6px 0 0;background:linear-gradient(90deg,#9a9ca0,#b8babe 4%,#8a8c90 25%,#5a5c62 45%,#34363a 58%,#2a2c30 70%,#3a3c40 80%,#55575c 90%,#6e7074 100%)"></div>
<div class="a" style="left:908px;top:380px;width:5px;height:460px;background:linear-gradient(90deg,#c8ccd4,#e8ecf4 50%,#b8c0d0),linear-gradient(#aab0bc,#d8dce8 20%,#d0d8ec 80%,#a8b0c0)"></div>
<div class="a" style="left:1442px;top:380px;width:6px;height:460px;background:linear-gradient(#9aa0ac,#d0d6e2 20%,#d4dae6 80%,#a8aeb8)"></div>
<div class="a" style="left:908px;top:835px;width:540px;height:5px;background:linear-gradient(90deg,#6a6c70,#3a3c40 40%,#2a2c30)"></div>
<svg class="a" style="left:915px;top:360px" width="15" height="15"><rect x="0.5" y="0.5" width="14" height="14" rx="1" fill="#3c3c3c"/><path d="M2,13 C3,8 7,3 13,2 C12,8 8,12 2,13Z" fill="#e0204a"/><path d="M4,11 L11,4 M5,12 L12,5" stroke="#ff6a88" stroke-width="0.9"/></svg>
<div class="a" style="left:928px;top:358px;width:280px;height:19px;background:rgba(235,236,238,.55);filter:blur(5px);border-radius:9px"></div>
<div class="t" style="left:935px;top:361px;font-size:12px;color:#141414">Edit Layer State: Building_WallAndWindowsDoor</div>
<div class="a" style="left:1396px;top:353px;width:47px;height:20px;border:1px solid #b06060;border-top:none;border-radius:0 0 5px 5px;background:linear-gradient(#e8b0b4,#d87078 40%,#c42a30 50%,#b81c20 80%,#d06a6a)"></div>
<svg class="a" style="left:1414px;top:357px" width="12" height="11"><path d="M2,1.5 L10,9.5 M10,1.5 L2,9.5" stroke="#fafafa" stroke-width="2.4"/></svg>
<div class="a" style="left:913px;top:381px;width:529px;height:454px;background:#f0f0f0;border:1px solid #6a6a6a"></div>
<svg class="a" style="left:930px;top:400px" width="20" height="18"><path d="M2,8 C3,4 10,3 17,5 L16,8 C10,7 5,7 2,8Z" fill="#d8d8d8" stroke="#a0a0a0"/><path d="M2,11 C6,9 12,9 16,10" fill="none" stroke="#a8a8a8"/><circle cx="14" cy="13" r="4" fill="#b0b0b0" stroke="#909090"/><path d="M14,10.5 V15.5 M11.5,13 H16.5" stroke="#fff" stroke-width="1.4"/></svg>
<div class="t" style="left:930px;top:423px;font-size:12px;color:#9a9a9a">Add</div>
<svg class="a" style="left:976px;top:400px" width="18" height="18"><circle cx="9" cy="9" r="7.5" fill="#d02030" stroke="#a01020"/><circle cx="9" cy="9" r="8.3" fill="none" stroke="#f0c0c0" stroke-width="0.8"/><path d="M6,6 L12,12 M12,6 L6,12" stroke="#fff" stroke-width="2.2"/></svg>
<div class="t" style="left:968px;top:423px;font-size:12px;color:#1a1a1a">Delete</div>
<svg class="a" style="left:1029px;top:401px" width="20" height="16"><path d="M1.5,5.5 H10 V1.5 L18,8 L10,14.5 V10.5 H1.5Z" fill="#f4f040" stroke="#3a3a10" stroke-width="1.2"/></svg>
<div class="t" style="left:1018px;top:423px;font-size:12px;color:#1a1a1a">Activate</div>
<div class="a" style="left:925px;top:446px;width:476px;height:348px;border:1px solid #828790;background:#fff"></div>
<div class="a" style="left:926px;top:447px;width:458px;height:22px;background:linear-gradient(#ffffff,#f6f7f9);border-bottom:1px solid #e0e0e8"></div>
<div class="a" style="left:995px;top:451px;width:1px;height:325px;background:#ececec"></div>
<div class="a" style="left:1095px;top:451px;width:1px;height:325px;background:#ececec"></div>
<div class="a" style="left:1161px;top:451px;width:1px;height:325px;background:#ececec"></div>
<div class="a" style="left:1234px;top:451px;width:1px;height:325px;background:#ececec"></div>
<div class="a" style="left:1295px;top:451px;width:1px;height:325px;background:#ececec"></div>
<div class="t" style="left:945px;top:452px;font-size:12px;color:#1a1a1a">Status</div>
<div class="t" style="left:1019px;top:452px;font-size:12px;color:#1a1a1a">Name</div>
<div class="t" style="left:1114px;top:452px;font-size:12px;color:#1a1a1a">Show</div>
<div class="t" style="left:1181px;top:452px;font-size:12px;color:#1a1a1a">Frozen</div>
<div class="t" style="left:1252px;top:452px;font-size:12px;color:#1a1a1a">Lock</div>
<div class="t" style="left:1320px;top:452px;font-size:12px;color:#1a1a1a">LineColor</div>
<svg class="a" style="left:1076px;top:452px" width="10" height="6"><path d="M0.5,5 L5,0.5 L9.5,5Z" fill="#b8bcc4"/></svg>
<div class="a" style="left:926px;top:469px;width:458px;height:307px;overflow:hidden">
<div class="a" style="left:0;top:0px;width:457px;height:23px;background:#3a8ee6"></div>
<div class="a" style="left:69px;top:0px;width:1px;height:23px;background:#a8e0ff"></div>
<div class="a" style="left:169px;top:0px;width:1px;height:23px;background:#a8e0ff"></div>
<div class="a" style="left:235px;top:0px;width:1px;height:23px;background:#a8e0ff"></div>
<div class="a" style="left:308px;top:0px;width:1px;height:23px;background:#a8e0ff"></div>
<div class="a" style="left:369px;top:0px;width:1px;height:23px;background:#a8e0ff"></div>
<svg class="a" style="left:26px;top:6px" width="18" height="9"><path d="M0.5,4.5 L4,1.5 L9,0.5 L16.5,2 L13,4.5Z" fill="#e0eab0" stroke="#c8d4a0"/><path d="M0.5,4.5 H13 L16.5,2 V3.5 L13,6 H0.5Z" fill="#c8d080" stroke="#a0b070" stroke-width="0.8"/><path d="M0.5,7.5 H12.5 L16,5" fill="none" stroke="#b0c080" stroke-width="1"/></svg>
<div class="t" style="left:73px;top:7px;font-size:12px;color:#bfefff">0</div>
<svg class="a" style="left:195px;top:6px" width="12" height="12"><circle cx="6" cy="6" r="4.6" fill="#30d030" stroke="#60d060" stroke-width="1"/><circle cx="5" cy="5" r="1.5" fill="#70f070"/></svg>
<svg class="a" style="left:263px;top:5px" width="17" height="13"><path d="M2,3.5 C2,1.5 4,1 5.5,1.7 C6.5,2.2 7.5,2 8.5,1.4 C10,0.8 11,1.2 12,1.4 C13.5,1 15,1.8 15,3.8 C15,6.5 13.5,8.5 13,11.5 L12,11.5 C11.5,9 10.5,7 9.5,7 C8.5,7 8,8.2 6.5,8.2 L5.5,11.5 L4.5,11.5 C4,8.5 2,6.5 2,3.5Z" fill="#ffffff" stroke="#d8f0ff" stroke-width="1"/><path d="M5.5,5.5 L7,4.5 L8.5,5.5" fill="none" stroke="#d8f0ff" stroke-width="0.8"/></svg>
<svg class="a" style="left:331px;top:5px" width="16" height="15"><path d="M2,7.5 V4.5 C2,2 3.5,0.8 5,0.8 C6.5,0.8 8,2 8,4.5 V6" fill="none" stroke="#e0f0ff" stroke-width="1.3"/><rect x="6" y="5.5" width="8" height="8" fill="#e2e084" stroke="#7a7a38" stroke-width="1"/></svg>
<svg class="a" style="left:373px;top:5px" width="13" height="13"><circle cx="6.5" cy="6.5" r="5" fill="#d0e8ff" stroke="#2050a0" stroke-width="1.2"/></svg>
<div class="t" style="left:391px;top:7px;font-size:12px;color:#bfefff">White</div>
<div class="a" style="left:0;top:45px;width:457px;height:1px;background:#efefef"></div>
<svg class="a" style="left:26px;top:29px" width="18" height="9"><path d="M0.5,4.5 L4,1.5 L9,0.5 L16.5,2 L13,4.5Z" fill="#eef4a8" stroke="#a0a860"/><path d="M0.5,4.5 H13 L16.5,2 V3.5 L13,6 H0.5Z" fill="#c8d080" stroke="#4a5020" stroke-width="0.8"/><path d="M0.5,7.5 H12.5 L16,5" fill="none" stroke="#404818" stroke-width="1.2"/></svg>
<div class="t" style="left:73px;top:30px;font-size:12px;color:#141414">ASHADE</div>
<svg class="a" style="left:195px;top:29px" width="12" height="12"><circle cx="6" cy="6" r="4.6" fill="#30d030" stroke="#149a14" stroke-width="1"/><circle cx="5" cy="5" r="1.5" fill="#70f070"/></svg>
<svg class="a" style="left:263px;top:28px" width="17" height="13"><path d="M2,3.5 C2,1.5 4,1 5.5,1.7 C6.5,2.2 7.5,2 8.5,1.4 C10,0.8 11,1.2 12,1.4 C13.5,1 15,1.8 15,3.8 C15,6.5 13.5,8.5 13,11.5 L12,11.5 C11.5,9 10.5,7 9.5,7 C8.5,7 8,8.2 6.5,8.2 L5.5,11.5 L4.5,11.5 C4,8.5 2,6.5 2,3.5Z" fill="#fafafa" stroke="#8a9494" stroke-width="1"/><path d="M5.5,5.5 L7,4.5 L8.5,5.5" fill="none" stroke="#8a9494" stroke-width="0.8"/></svg>
<svg class="a" style="left:331px;top:28px" width="16" height="15"><path d="M2,7.5 V4.5 C2,2 3.5,0.8 5,0.8 C6.5,0.8 8,2 8,4.5 V6" fill="none" stroke="#2a2a2a" stroke-width="1.3"/><rect x="6" y="5.5" width="8" height="8" fill="#e2e084" stroke="#7a7a38" stroke-width="1"/></svg>
<svg class="a" style="left:373px;top:28px" width="13" height="13"><circle cx="6.5" cy="6.5" r="5" fill="#ffffff" stroke="#202020" stroke-width="1.2"/></svg>
<div class="t" style="left:391px;top:30px;font-size:12px;color:#141414">White</div>
<div class="a" style="left:0;top:68px;width:457px;height:1px;background:#efefef"></div>
<svg class="a" style="left:26px;top:52px" width="18" height="9"><path d="M0.5,4.5 L4,1.5 L9,0.5 L16.5,2 L13,4.5Z" fill="#eef4a8" stroke="#a0a860"/><path d="M0.5,4.5 H13 L16.5,2 V3.5 L13,6 H0.5Z" fill="#c8d080" stroke="#4a5020" stroke-width="0.8"/><path d="M0.5,7.5 H12.5 L16,5" fill="none" stroke="#404818" stroke-width="1.2"/></svg>
<div class="t" style="left:73px;top:53px;font-size:12px;color:#141414">Building_Axis</div>
<svg class="a" style="left:195px;top:52px" width="12" height="12"><circle cx="6" cy="6" r="4.6" fill="#30d030" stroke="#149a14" stroke-width="1"/><circle cx="5" cy="5" r="1.5" fill="#70f070"/></svg>
<svg class="a" style="left:263px;top:51px" width="17" height="13"><path d="M2,3.5 C2,1.5 4,1 5.5,1.7 C6.5,2.2 7.5,2 8.5,1.4 C10,0.8 11,1.2 12,1.4 C13.5,1 15,1.8 15,3.8 C15,6.5 13.5,8.5 13,11.5 L12,11.5 C11.5,9 10.5,7 9.5,7 C8.5,7 8,8.2 6.5,8.2 L5.5,11.5 L4.5,11.5 C4,8.5 2,6.5 2,3.5Z" fill="#fafafa" stroke="#8a9494" stroke-width="1"/><path d="M5.5,5.5 L7,4.5 L8.5,5.5" fill="none" stroke="#8a9494" stroke-width="0.8"/></svg>
<svg class="a" style="left:331px;top:51px" width="16" height="15"><path d="M2,7.5 V4.5 C2,2 3.5,0.8 5,0.8 C6.5,0.8 8,2 8,4.5 V6" fill="none" stroke="#2a2a2a" stroke-width="1.3"/><rect x="6" y="5.5" width="8" height="8" fill="#e2e084" stroke="#7a7a38" stroke-width="1"/></svg>
<svg class="a" style="left:373px;top:51px" width="13" height="13"><circle cx="6.5" cy="6.5" r="5" fill="#e00010" stroke="#700010" stroke-width="1.2"/></svg>
<div class="t" style="left:391px;top:53px;font-size:12px;color:#141414">Red</div>
<div class="a" style="left:0;top:91px;width:457px;height:1px;background:#efefef"></div>
<svg class="a" style="left:26px;top:75px" width="18" height="9"><path d="M0.5,4.5 L4,1.5 L9,0.5 L16.5,2 L13,4.5Z" fill="#eef4a8" stroke="#a0a860"/><path d="M0.5,4.5 H13 L16.5,2 V3.5 L13,6 H0.5Z" fill="#c8d080" stroke="#4a5020" stroke-width="0.8"/><path d="M0.5,7.5 H12.5 L16,5" fill="none" stroke="#404818" stroke-width="1.2"/></svg>
<div class="t" style="left:73px;top:76px;font-size:12px;color:#141414">Buildin...rpenter</div>
<svg class="a" style="left:195px;top:75px" width="12" height="12"><circle cx="6" cy="6" r="4.6" fill="#30d030" stroke="#149a14" stroke-width="1"/><circle cx="5" cy="5" r="1.5" fill="#70f070"/></svg>
<svg class="a" style="left:264px;top:76px" width="16" height="10"><path d="M1.5,3.5 C4,1.5 11,1 14.5,2.5 L14,5.5 C10,7 5,7.5 2,7Z" fill="#e6f2f8" stroke="#8aa0b0" stroke-width="1"/></svg>
<svg class="a" style="left:331px;top:74px" width="16" height="15"><path d="M2,7.5 V4.5 C2,2 3.5,0.8 5,0.8 C6.5,0.8 8,2 8,4.5 V6" fill="none" stroke="#2a2a2a" stroke-width="1.3"/><rect x="6" y="5.5" width="8" height="8" fill="#e2e084" stroke="#7a7a38" stroke-width="1"/></svg>
<svg class="a" style="left:373px;top:74px" width="13" height="13"><circle cx="6.5" cy="6.5" r="5" fill="#808080" stroke="#606060" stroke-width="1.2"/></svg>
<div class="t" style="left:391px;top:76px;font-size:12px;color:#141414">252</div>
<div class="a" style="left:0;top:114px;width:457px;height:1px;background:#efefef"></div>
<svg class="a" style="left:26px;top:98px" width="18" height="9"><path d="M0.5,4.5 L4,1.5 L9,0.5 L16.5,2 L13,4.5Z" fill="#eef4a8" stroke="#a0a860"/><path d="M0.5,4.5 H13 L16.5,2 V3.5 L13,6 H0.5Z" fill="#c8d080" stroke="#4a5020" stroke-width="0.8"/><path d="M0.5,7.5 H12.5 L16,5" fill="none" stroke="#404818" stroke-width="1.2"/></svg>
<div class="t" style="left:73px;top:99px;font-size:12px;color:#141414">Buildin...uipment</div>
<svg class="a" style="left:195px;top:98px" width="12" height="12"><circle cx="6" cy="6" r="4.6" fill="#30d030" stroke="#149a14" stroke-width="1"/><circle cx="5" cy="5" r="1.5" fill="#70f070"/></svg>
<svg class="a" style="left:263px;top:97px" width="17" height="13"><path d="M2,3.5 C2,1.5 4,1 5.5,1.7 C6.5,2.2 7.5,2 8.5,1.4 C10,0.8 11,1.2 12,1.4 C13.5,1 15,1.8 15,3.8 C15,6.5 13.5,8.5 13,11.5 L12,11.5 C11.5,9 10.5,7 9.5,7 C8.5,7 8,8.2 6.5,8.2 L5.5,11.5 L4.5,11.5 C4,8.5 2,6.5 2,3.5Z" fill="#fafafa" stroke="#8a9494" stroke-width="1"/><path d="M5.5,5.5 L7,4.5 L8.5,5.5" fill="none" stroke="#8a9494" stroke-width="0.8"/></svg>
<svg class="a" style="left:331px;top:97px" width="16" height="15"><path d="M2,7.5 V4.5 C2,2 3.5,0.8 5,0.8 C6.5,0.8 8,2 8,4.5 V6" fill="none" stroke="#2a2a2a" stroke-width="1.3"/><rect x="6" y="5.5" width="8" height="8" fill="#e2e084" stroke="#7a7a38" stroke-width="1"/></svg>
<svg class="a" style="left:373px;top:97px" width="13" height="13"><circle cx="6.5" cy="6.5" r="5" fill="#808080" stroke="#606060" stroke-width="1.2"/></svg>
<div class="t" style="left:391px;top:99px;font-size:12px;color:#141414">252</div>
<div class="a" style="left:0;top:137px;width:457px;height:1px;background:#efefef"></div>
<svg class="a" style="left:26px;top:121px" width="18" height="9"><path d="M0.5,4.5 L4,1.5 L9,0.5 L16.5,2 L13,4.5Z" fill="#eef4a8" stroke="#a0a860"/><path d="M0.5,4.5 H13 L16.5,2 V3.5 L13,6 H0.5Z" fill="#c8d080" stroke="#4a5020" stroke-width="0.8"/><path d="M0.5,7.5 H12.5 L16,5" fill="none" stroke="#404818" stroke-width="1.2"/></svg>
<div class="t" style="left:73px;top:122px;font-size:12px;color:#141414">Building_Flooring</div>
<svg class="a" style="left:195px;top:121px" width="12" height="12"><circle cx="6" cy="6" r="4.6" fill="#30d030" stroke="#149a14" stroke-width="1"/><circle cx="5" cy="5" r="1.5" fill="#70f070"/></svg>
<svg class="a" style="left:263px;top:120px" width="17" height="13"><path d="M2,3.5 C2,1.5 4,1 5.5,1.7 C6.5,2.2 7.5,2 8.5,1.4 C10,0.8 11,1.2 12,1.4 C13.5,1 15,1.8 15,3.8 C15,6.5 13.5,8.5 13,11.5 L12,11.5 C11.5,9 10.5,7 9.5,7 C8.5,7 8,8.2 6.5,8.2 L5.5,11.5 L4.5,11.5 C4,8.5 2,6.5 2,3.5Z" fill="#fafafa" stroke="#8a9494" stroke-width="1"/><path d="M5.5,5.5 L7,4.5 L8.5,5.5" fill="none" stroke="#8a9494" stroke-width="0.8"/></svg>
<svg class="a" style="left:331px;top:120px" width="16" height="15"><path d="M2,7.5 V4.5 C2,2 3.5,0.8 5,0.8 C6.5,0.8 8,2 8,4.5 V6" fill="none" stroke="#2a2a2a" stroke-width="1.3"/><rect x="6" y="5.5" width="8" height="8" fill="#e2e084" stroke="#7a7a38" stroke-width="1"/></svg>
<svg class="a" style="left:373px;top:120px" width="13" height="13"><circle cx="6.5" cy="6.5" r="5" fill="#e00010" stroke="#700010" stroke-width="1.2"/></svg>
<div class="t" style="left:391px;top:122px;font-size:12px;color:#141414">Red</div>
<div class="a" style="left:0;top:160px;width:457px;height:1px;background:#efefef"></div>
<svg class="a" style="left:26px;top:144px" width="18" height="9"><path d="M0.5,4.5 L4,1.5 L9,0.5 L16.5,2 L13,4.5Z" fill="#eef4a8" stroke="#a0a860"/><path d="M0.5,4.5 H13 L16.5,2 V3.5 L13,6 H0.5Z" fill="#c8d080" stroke="#4a5020" stroke-width="0.8"/><path d="M0.5,7.5 H12.5 L16,5" fill="none" stroke="#404818" stroke-width="1.2"/></svg>
<div class="t" style="left:73px;top:145px;font-size:12px;color:#141414">Buildin...h Solid</div>
<svg class="a" style="left:195px;top:144px" width="12" height="12"><circle cx="6" cy="6" r="4.6" fill="#30d030" stroke="#149a14" stroke-width="1"/><circle cx="5" cy="5" r="1.5" fill="#70f070"/></svg>
<svg class="a" style="left:263px;top:143px" width="17" height="13"><path d="M2,3.5 C2,1.5 4,1 5.5,1.7 C6.5,2.2 7.5,2 8.5,1.4 C10,0.8 11,1.2 12,1.4 C13.5,1 15,1.8 15,3.8 C15,6.5 13.5,8.5 13,11.5 L12,11.5 C11.5,9 10.5,7 9.5,7 C8.5,7 8,8.2 6.5,8.2 L5.5,11.5 L4.5,11.5 C4,8.5 2,6.5 2,3.5Z" fill="#fafafa" stroke="#8a9494" stroke-width="1"/><path d="M5.5,5.5 L7,4.5 L8.5,5.5" fill="none" stroke="#8a9494" stroke-width="0.8"/></svg>
<svg class="a" style="left:331px;top:143px" width="16" height="15"><path d="M2,7.5 V4.5 C2,2 3.5,0.8 5,0.8 C6.5,0.8 8,2 8,4.5 V6" fill="none" stroke="#2a2a2a" stroke-width="1.3"/><rect x="6" y="5.5" width="8" height="8" fill="#e2e084" stroke="#7a7a38" stroke-width="1"/></svg>
<svg class="a" style="left:373px;top:143px" width="13" height="13"><circle cx="6.5" cy="6.5" r="5" fill="#b0b0b0" stroke="#606060" stroke-width="1.2"/></svg>
<div class="t" style="left:391px;top:145px;font-size:12px;color:#141414">253</div>
<div class="a" style="left:0;top:183px;width:457px;height:1px;background:#efefef"></div>
<svg class="a" style="left:26px;top:167px" width="18" height="9"><path d="M0.5,4.5 L4,1.5 L9,0.5 L16.5,2 L13,4.5Z" fill="#eef4a8" stroke="#a0a860"/><path d="M0.5,4.5 H13 L16.5,2 V3.5 L13,6 H0.5Z" fill="#c8d080" stroke="#4a5020" stroke-width="0.8"/><path d="M0.5,7.5 H12.5 L16,5" fill="none" stroke="#404818" stroke-width="1.2"/></svg>
<div class="t" style="left:73px;top:168px;font-size:12px;color:#141414">Building_Stairs</div>
<svg class="a" style="left:195px;top:167px" width="12" height="12"><circle cx="6" cy="6" r="4.6" fill="#30d030" stroke="#149a14" stroke-width="1"/><circle cx="5" cy="5" r="1.5" fill="#70f070"/></svg>
<svg class="a" style="left:263px;top:166px" width="17" height="13"><path d="M2,3.5 C2,1.5 4,1 5.5,1.7 C6.5,2.2 7.5,2 8.5,1.4 C10,0.8 11,1.2 12,1.4 C13.5,1 15,1.8 15,3.8 C15,6.5 13.5,8.5 13,11.5 L12,11.5 C11.5,9 10.5,7 9.5,7 C8.5,7 8,8.2 6.5,8.2 L5.5,11.5 L4.5,11.5 C4,8.5 2,6.5 2,3.5Z" fill="#fafafa" stroke="#8a9494" stroke-width="1"/><path d="M5.5,5.5 L7,4.5 L8.5,5.5" fill="none" stroke="#8a9494" stroke-width="0.8"/></svg>
<svg class="a" style="left:331px;top:166px" width="16" height="15"><path d="M2,7.5 V4.5 C2,2 3.5,0.8 5,0.8 C6.5,0.8 8,2 8,4.5 V6" fill="none" stroke="#2a2a2a" stroke-width="1.3"/><rect x="6" y="5.5" width="8" height="8" fill="#e2e084" stroke="#7a7a38" stroke-width="1"/></svg>
<svg class="a" style="left:373px;top:166px" width="13" height="13"><circle cx="6.5" cy="6.5" r="5" fill="#808080" stroke="#606060" stroke-width="1.2"/></svg>
<div class="t" style="left:391px;top:168px;font-size:12px;color:#141414">252</div>
<div class="a" style="left:0;top:206px;width:457px;height:1px;background:#efefef"></div>
<svg class="a" style="left:25px;top:189px" width="19" height="13"><path d="M1.5,4.5 H9 V1 L17,6.5 L9,12 V8.5 H1.5Z" fill="#e8e830" stroke="#4a4a10" stroke-width="1.2"/></svg>
<div class="t" style="left:73px;top:191px;font-size:12px;color:#141414">Building_Walls</div>
<svg class="a" style="left:195px;top:190px" width="12" height="12"><circle cx="6" cy="6" r="4.6" fill="#30d030" stroke="#149a14" stroke-width="1"/><circle cx="5" cy="5" r="1.5" fill="#70f070"/></svg>
<svg class="a" style="left:264px;top:191px" width="16" height="10"><path d="M1.5,3.5 C4,1.5 11,1 14.5,2.5 L14,5.5 C10,7 5,7.5 2,7Z" fill="#e6f2f8" stroke="#8aa0b0" stroke-width="1"/></svg>
<svg class="a" style="left:331px;top:189px" width="16" height="15"><path d="M2,7.5 V4.5 C2,2 3.5,0.8 5,0.8 C6.5,0.8 8,2 8,4.5 V6" fill="none" stroke="#2a2a2a" stroke-width="1.3"/><rect x="6" y="5.5" width="8" height="8" fill="#e2e084" stroke="#7a7a38" stroke-width="1"/></svg>
<svg class="a" style="left:373px;top:189px" width="13" height="13"><circle cx="6.5" cy="6.5" r="5" fill="#808080" stroke="#606060" stroke-width="1.2"/></svg>
<div class="t" style="left:391px;top:191px;font-size:12px;color:#141414">252</div>
<div class="a" style="left:0;top:229px;width:457px;height:1px;background:#efefef"></div>
<svg class="a" style="left:26px;top:213px" width="18" height="9"><path d="M0.5,4.5 L4,1.5 L9,0.5 L16.5,2 L13,4.5Z" fill="#eef4a8" stroke="#a0a860"/><path d="M0.5,4.5 H13 L16.5,2 V3.5 L13,6 H0.5Z" fill="#c8d080" stroke="#4a5020" stroke-width="0.8"/><path d="M0.5,7.5 H12.5 L16,5" fill="none" stroke="#404818" stroke-width="1.2"/></svg>
<div class="t" style="left:73px;top:214px;font-size:12px;color:#141414">Buildin...acilities</div>
<svg class="a" style="left:195px;top:213px" width="12" height="12"><circle cx="6" cy="6" r="4.6" fill="#30d030" stroke="#149a14" stroke-width="1"/><circle cx="5" cy="5" r="1.5" fill="#70f070"/></svg>
<svg class="a" style="left:263px;top:212px" width="17" height="13"><path d="M2,3.5 C2,1.5 4,1 5.5,1.7 C6.5,2.2 7.5,2 8.5,1.4 C10,0.8 11,1.2 12,1.4 C13.5,1 15,1.8 15,3.8 C15,6.5 13.5,8.5 13,11.5 L12,11.5 C11.5,9 10.5,7 9.5,7 C8.5,7 8,8.2 6.5,8.2 L5.5,11.5 L4.5,11.5 C4,8.5 2,6.5 2,3.5Z" fill="#fafafa" stroke="#8a9494" stroke-width="1"/><path d="M5.5,5.5 L7,4.5 L8.5,5.5" fill="none" stroke="#8a9494" stroke-width="0.8"/></svg>
<svg class="a" style="left:331px;top:212px" width="16" height="15"><path d="M2,7.5 V4.5 C2,2 3.5,0.8 5,0.8 C6.5,0.8 8,2 8,4.5 V6" fill="none" stroke="#2a2a2a" stroke-width="1.3"/><rect x="6" y="5.5" width="8" height="8" fill="#e2e084" stroke="#7a7a38" stroke-width="1"/></svg>
<svg class="a" style="left:373px;top:212px" width="13" height="13"><circle cx="6.5" cy="6.5" r="5" fill="#808080" stroke="#606060" stroke-width="1.2"/></svg>
<div class="t" style="left:391px;top:214px;font-size:12px;color:#141414">252</div>
<div class="a" style="left:0;top:252px;width:457px;height:1px;background:#efefef"></div>
<svg class="a" style="left:26px;top:236px" width="18" height="9"><path d="M0.5,4.5 L4,1.5 L9,0.5 L16.5,2 L13,4.5Z" fill="#eef4a8" stroke="#a0a860"/><path d="M0.5,4.5 H13 L16.5,2 V3.5 L13,6 H0.5Z" fill="#c8d080" stroke="#4a5020" stroke-width="0.8"/><path d="M0.5,7.5 H12.5 L16,5" fill="none" stroke="#404818" stroke-width="1.2"/></svg>
<div class="t" style="left:73px;top:237px;font-size:12px;color:#141414">Defpoints</div>
<svg class="a" style="left:195px;top:236px" width="12" height="12"><circle cx="6" cy="6" r="4.6" fill="#30d030" stroke="#149a14" stroke-width="1"/><circle cx="5" cy="5" r="1.5" fill="#70f070"/></svg>
<svg class="a" style="left:263px;top:235px" width="17" height="13"><path d="M2,3.5 C2,1.5 4,1 5.5,1.7 C6.5,2.2 7.5,2 8.5,1.4 C10,0.8 11,1.2 12,1.4 C13.5,1 15,1.8 15,3.8 C15,6.5 13.5,8.5 13,11.5 L12,11.5 C11.5,9 10.5,7 9.5,7 C8.5,7 8,8.2 6.5,8.2 L5.5,11.5 L4.5,11.5 C4,8.5 2,6.5 2,3.5Z" fill="#fafafa" stroke="#8a9494" stroke-width="1"/><path d="M5.5,5.5 L7,4.5 L8.5,5.5" fill="none" stroke="#8a9494" stroke-width="0.8"/></svg>
<svg class="a" style="left:331px;top:235px" width="16" height="15"><path d="M2,7.5 V4.5 C2,2 3.5,0.8 5,0.8 C6.5,0.8 8,2 8,4.5 V6" fill="none" stroke="#2a2a2a" stroke-width="1.3"/><rect x="6" y="5.5" width="8" height="8" fill="#e2e084" stroke="#7a7a38" stroke-width="1"/></svg>
<svg class="a" style="left:373px;top:235px" width="13" height="13"><circle cx="6.5" cy="6.5" r="5" fill="#ffffff" stroke="#202020" stroke-width="1.2"/></svg>
<div class="t" style="left:391px;top:237px;font-size:12px;color:#141414">White</div>
<div class="a" style="left:0;top:275px;width:457px;height:1px;background:#efefef"></div>
<svg class="a" style="left:26px;top:259px" width="18" height="9"><path d="M0.5,4.5 L4,1.5 L9,0.5 L16.5,2 L13,4.5Z" fill="#eef4a8" stroke="#a0a860"/><path d="M0.5,4.5 H13 L16.5,2 V3.5 L13,6 H0.5Z" fill="#c8d080" stroke="#4a5020" stroke-width="0.8"/><path d="M0.5,7.5 H12.5 L16,5" fill="none" stroke="#404818" stroke-width="1.2"/></svg>
<div class="t" style="left:73px;top:260px;font-size:12px;color:#141414">Electri...Cabling</div>
<svg class="a" style="left:195px;top:259px" width="12" height="12"><circle cx="6" cy="6" r="4.6" fill="#30d030" stroke="#149a14" stroke-width="1"/><circle cx="5" cy="5" r="1.5" fill="#70f070"/></svg>
<svg class="a" style="left:263px;top:258px" width="17" height="13"><path d="M2,3.5 C2,1.5 4,1 5.5,1.7 C6.5,2.2 7.5,2 8.5,1.4 C10,0.8 11,1.2 12,1.4 C13.5,1 15,1.8 15,3.8 C15,6.5 13.5,8.5 13,11.5 L12,11.5 C11.5,9 10.5,7 9.5,7 C8.5,7 8,8.2 6.5,8.2 L5.5,11.5 L4.5,11.5 C4,8.5 2,6.5 2,3.5Z" fill="#fafafa" stroke="#8a9494" stroke-width="1"/><path d="M5.5,5.5 L7,4.5 L8.5,5.5" fill="none" stroke="#8a9494" stroke-width="0.8"/></svg>
<svg class="a" style="left:331px;top:258px" width="16" height="15"><path d="M2,7.5 V4.5 C2,2 3.5,0.8 5,0.8 C6.5,0.8 8,2 8,4.5 V6" fill="none" stroke="#2a2a2a" stroke-width="1.3"/><rect x="6" y="5.5" width="8" height="8" fill="#e2e084" stroke="#7a7a38" stroke-width="1"/></svg>
<svg class="a" style="left:373px;top:258px" width="13" height="13"><circle cx="6.5" cy="6.5" r="5" fill="#7050a0" stroke="#403060" stroke-width="1.2"/></svg>
<div class="t" style="left:391px;top:260px;font-size:12px;color:#141414">205</div>
<div class="a" style="left:0;top:298px;width:457px;height:1px;background:#efefef"></div>
<svg class="a" style="left:26px;top:282px" width="18" height="9"><path d="M0.5,4.5 L4,1.5 L9,0.5 L16.5,2 L13,4.5Z" fill="#eef4a8" stroke="#a0a860"/><path d="M0.5,4.5 H13 L16.5,2 V3.5 L13,6 H0.5Z" fill="#c8d080" stroke="#4a5020" stroke-width="0.8"/><path d="M0.5,7.5 H12.5 L16,5" fill="none" stroke="#404818" stroke-width="1.2"/></svg>
<div class="t" style="left:73px;top:283px;font-size:12px;color:#141414">Electri...mbology</div>
<svg class="a" style="left:195px;top:282px" width="12" height="12"><circle cx="6" cy="6" r="4.6" fill="#30d030" stroke="#149a14" stroke-width="1"/><circle cx="5" cy="5" r="1.5" fill="#70f070"/></svg>
<svg class="a" style="left:263px;top:281px" width="17" height="13"><path d="M2,3.5 C2,1.5 4,1 5.5,1.7 C6.5,2.2 7.5,2 8.5,1.4 C10,0.8 11,1.2 12,1.4 C13.5,1 15,1.8 15,3.8 C15,6.5 13.5,8.5 13,11.5 L12,11.5 C11.5,9 10.5,7 9.5,7 C8.5,7 8,8.2 6.5,8.2 L5.5,11.5 L4.5,11.5 C4,8.5 2,6.5 2,3.5Z" fill="#fafafa" stroke="#8a9494" stroke-width="1"/><path d="M5.5,5.5 L7,4.5 L8.5,5.5" fill="none" stroke="#8a9494" stroke-width="0.8"/></svg>
<svg class="a" style="left:331px;top:281px" width="16" height="15"><path d="M2,7.5 V4.5 C2,2 3.5,0.8 5,0.8 C6.5,0.8 8,2 8,4.5 V6" fill="none" stroke="#2a2a2a" stroke-width="1.3"/><rect x="6" y="5.5" width="8" height="8" fill="#e2e084" stroke="#7a7a38" stroke-width="1"/></svg>
<svg class="a" style="left:373px;top:281px" width="13" height="13"><circle cx="6.5" cy="6.5" r="5" fill="#a00090" stroke="#403060" stroke-width="1.2"/></svg>
<div class="t" style="left:391px;top:283px;font-size:12px;color:#141414">222</div>
<div class="a" style="left:0;top:321px;width:457px;height:1px;background:#efefef"></div>
<svg class="a" style="left:26px;top:305px" width="18" height="9"><path d="M0.5,4.5 L4,1.5 L9,0.5 L16.5,2 L13,4.5Z" fill="#eef4a8" stroke="#a0a860"/><path d="M0.5,4.5 H13 L16.5,2 V3.5 L13,6 H0.5Z" fill="#c8d080" stroke="#4a5020" stroke-width="0.8"/><path d="M0.5,7.5 H12.5 L16,5" fill="none" stroke="#404818" stroke-width="1.2"/></svg>
<div class="t" style="left:73px;top:306px;font-size:12px;color:#141414">Electri...</div>
<svg class="a" style="left:195px;top:305px" width="12" height="12"><circle cx="6" cy="6" r="4.6" fill="#30d030" stroke="#149a14" stroke-width="1"/><circle cx="5" cy="5" r="1.5" fill="#70f070"/></svg>
<svg class="a" style="left:263px;top:304px" width="17" height="13"><path d="M2,3.5 C2,1.5 4,1 5.5,1.7 C6.5,2.2 7.5,2 8.5,1.4 C10,0.8 11,1.2 12,1.4 C13.5,1 15,1.8 15,3.8 C15,6.5 13.5,8.5 13,11.5 L12,11.5 C11.5,9 10.5,7 9.5,7 C8.5,7 8,8.2 6.5,8.2 L5.5,11.5 L4.5,11.5 C4,8.5 2,6.5 2,3.5Z" fill="#fafafa" stroke="#8a9494" stroke-width="1"/><path d="M5.5,5.5 L7,4.5 L8.5,5.5" fill="none" stroke="#8a9494" stroke-width="0.8"/></svg>
<svg class="a" style="left:331px;top:304px" width="16" height="15"><path d="M2,7.5 V4.5 C2,2 3.5,0.8 5,0.8 C6.5,0.8 8,2 8,4.5 V6" fill="none" stroke="#2a2a2a" stroke-width="1.3"/><rect x="6" y="5.5" width="8" height="8" fill="#e2e084" stroke="#7a7a38" stroke-width="1"/></svg>
<svg class="a" style="left:373px;top:304px" width="13" height="13"><circle cx="6.5" cy="6.5" r="5" fill="#404040" stroke="#403060" stroke-width="1.2"/></svg>
<div class="t" style="left:391px;top:306px;font-size:12px;color:#141414">7</div>
</div>
<div class="a" style="left:1384px;top:447px;width:16px;height:329px;background:linear-gradient(90deg,#e6e6e6,#f4f4f4)"></div>
<svg class="a" style="left:1387px;top:453px" width="9" height="6"><path d="M0.5,5 L4.5,1 L8.5,5Z" fill="#404040"/></svg>
<svg class="a" style="left:1387px;top:765px" width="9" height="6"><path d="M0.5,1 L4.5,5 L8.5,1Z" fill="#404040"/></svg>
<div class="a" style="left:1385px;top:467px;width:14px;height:177px;border:1px solid #a8a8a8;border-radius:2px;background:linear-gradient(90deg,#f0f0f0,#dcdcdc 60%,#c8c8c8)"></div>
<div class="a" style="left:1389px;top:551px;width:6px;height:7px;border-top:1px solid #707070;border-bottom:1px solid #707070"></div><div class="a" style="left:1389px;top:554px;width:6px;height:1px;background:#707070"></div>
<div class="a" style="left:926px;top:776px;width:474px;height:17px;background:linear-gradient(#e8e8e8,#f4f4f4)"></div>
<svg class="a" style="left:931px;top:780px" width="6" height="9"><path d="M5,0.5 L1,4.5 L5,8.5Z" fill="#404040"/></svg>
<svg class="a" style="left:1372px;top:780px" width="6" height="9"><path d="M1,0.5 L5,4.5 L1,8.5Z" fill="#404040"/></svg>
<div class="a" style="left:944px;top:777px;width:178px;height:15px;border:1px solid #a0a0a0;border-radius:2px;background:linear-gradient(#f4f4f4,#e0e0e0 50%,#cacaca)"></div>
<div class="a" style="left:1029px;top:781px;width:7px;height:7px;border-left:1px solid #606060;border-right:1px solid #606060"></div><div class="a" style="left:1032px;top:781px;width:1px;height:7px;background:#606060"></div>
<div class="a" style="left:1408px;top:447px;width:21px;height:20px;border:1px solid #8a8a8a;border-radius:2px;background:linear-gradient(#fafafa,#e4e4e4)"></div>
<svg class="a" style="left:1411px;top:450px" width="15" height="14"><rect x="5.5" y="1.5" width="8" height="11" fill="#f4f4f4" stroke="#707070"/><rect x="7.5" y="3.5" width="4" height="7" fill="#fff" stroke="#909090"/><path d="M1,3 L4,5 L1,7Z" fill="#303030"/></svg>
<div class="a" style="left:1195px;top:801px;width:73px;height:22px;border:1px solid #3c9fd8;border-radius:3px;background:linear-gradient(#eef7fc,#dcebf5 50%,#c8e0f0 51%,#bcd8ee);box-shadow:inset 0 0 0 1px rgba(255,255,255,.7)"></div>
<svg class="a" style="left:1214px;top:805px" width="16" height="14"><path d="M1.5,7 L6,12 L14.5,1.5" fill="none" stroke="#28b028" stroke-width="2.6"/></svg>
<div class="t" style="left:1233px;top:806px;font-size:12px;letter-spacing:-0.3px;color:#1a1a1a">OK</div>
<div class="a" style="left:1276px;top:801px;width:73px;height:22px;border:1px solid #707070;border-radius:3px;background:linear-gradient(#f2f2f2,#ebebeb 50%,#dddddd 51%,#cfcfcf);box-shadow:inset 0 0 0 1px rgba(255,255,255,.7)"></div>
<svg class="a" style="left:1286px;top:804px" width="16" height="16"><path d="M2,2 L14,14 M14,2 L2,14" stroke="#d02020" stroke-width="2.6"/></svg>
<div class="t" style="left:1305px;top:806px;font-size:12px;letter-spacing:-0.3px;color:#1a1a1a">Cancel</div>
<div class="a" style="left:1357px;top:801px;width:73px;height:22px;border:1px solid #707070;border-radius:3px;background:linear-gradient(#f2f2f2,#ebebeb 50%,#dddddd 51%,#cfcfcf);box-shadow:inset 0 0 0 1px rgba(255,255,255,.7)"></div>
<svg class="a" style="left:1373px;top:804px" width="16" height="16"><rect x="0.5" y="0.5" width="15" height="15" rx="1" fill="#7890c8" stroke="#5a6ea8"/><text x="4" y="13" font-size="13" font-weight="bold" fill="#e8eef8" style="font-family:'Liberation Sans'">?</text></svg>
<div class="t" style="left:1391px;top:806px;font-size:12px;letter-spacing:-0.3px;color:#1a1a1a">Help</div>
<div class="a" style="left:1016px;top:689px;width:91px;height:29px;border:1px solid #767676;background:#ffffe1;box-shadow:1px 1px 2px rgba(0,0,0,.2)"></div>
<div class="t" style="left:1022px;top:697px;font-size:12px;color:#141414">Building_Walls</div>
<svg class="a" style="left:1026px;top:663px" width="14" height="20"><path d="M1,1 L1,15 L4.5,11.5 L7,17.5 L9,16.5 L6.8,10.8 L11.5,10.8Z" fill="#fff" stroke="#000" stroke-width="1"/></svg>
</body></html>
